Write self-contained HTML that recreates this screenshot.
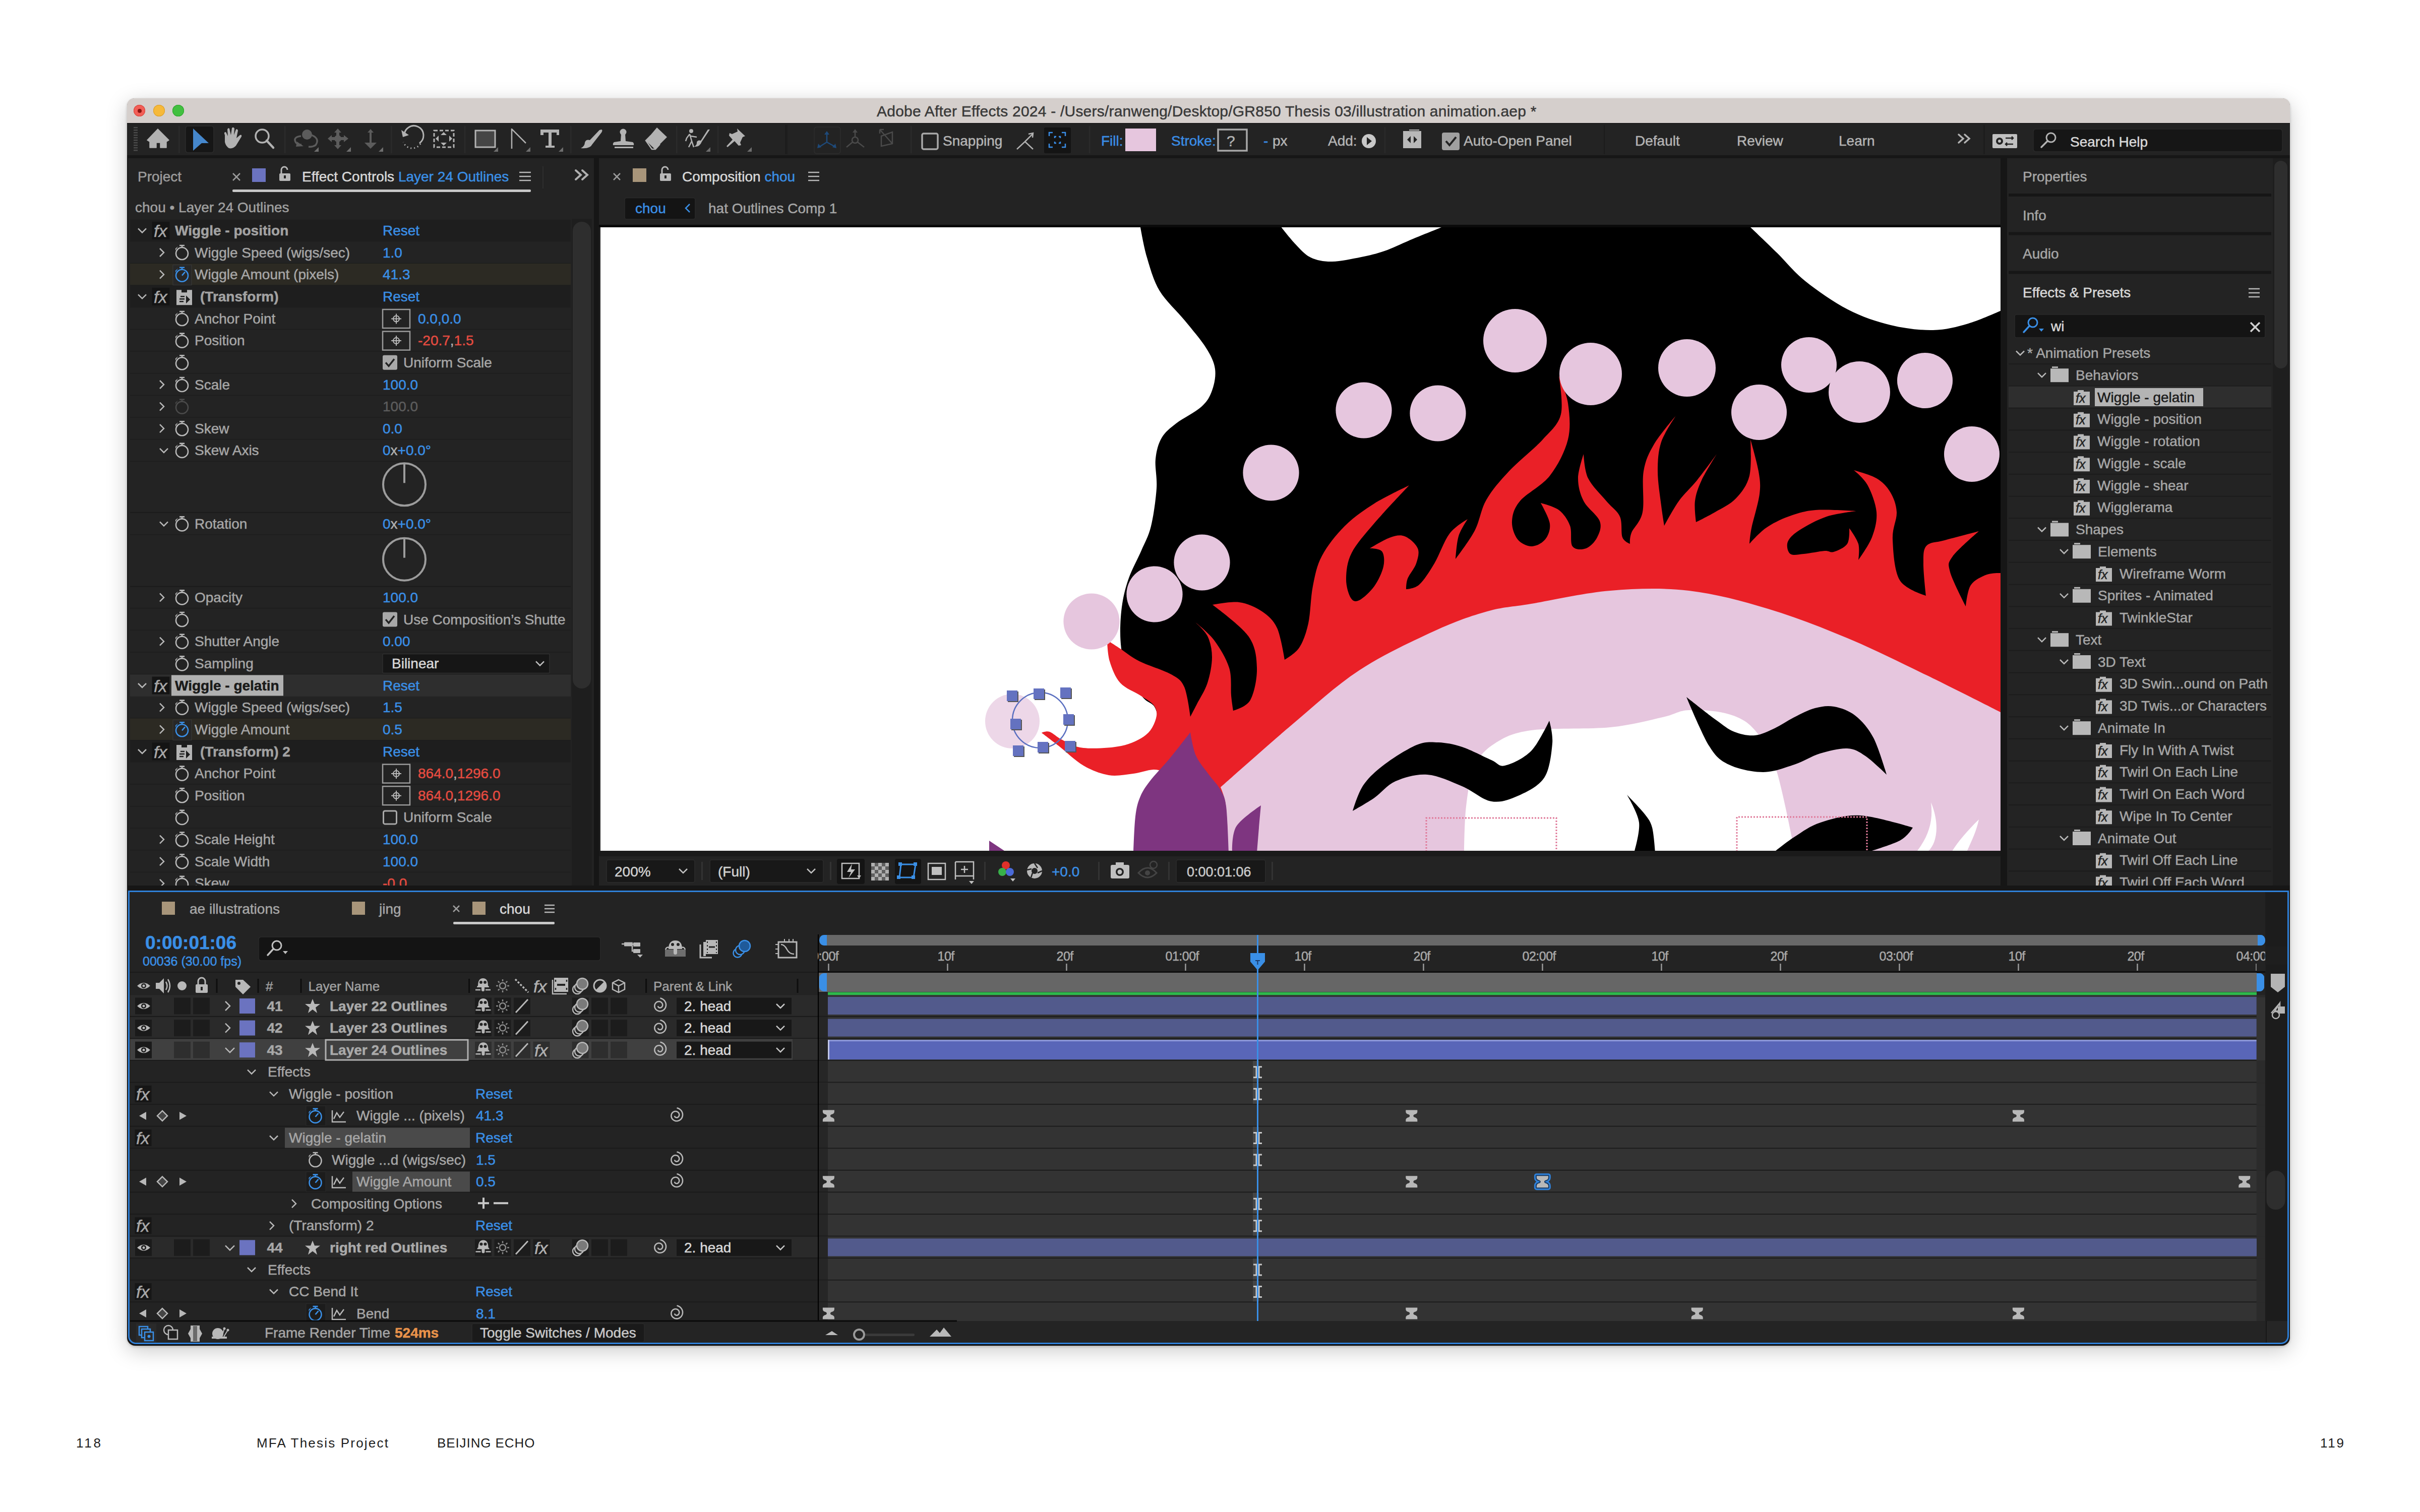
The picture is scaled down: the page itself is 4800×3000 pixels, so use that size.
<!DOCTYPE html><html><head><meta charset="utf-8"><style>
html,body{margin:0;padding:0}
body{width:4800px;height:3000px;background:#fff;position:relative;overflow:hidden;font-family:"Liberation Sans",sans-serif}
.a{position:absolute}
.t{white-space:nowrap;-webkit-text-stroke:0.5px currentColor}
svg.a{overflow:visible}
</style></head><body>
<div class="a t" style="left:151px;top:2842.5px;line-height:40px;font-size:26px;color:#1e1e1e;letter-spacing:3.8px;-webkit-text-stroke:0">118</div>
<div class="a t" style="left:509px;top:2842.5px;line-height:40px;font-size:26px;color:#1e1e1e;letter-spacing:2.2px;-webkit-text-stroke:0">MFA Thesis Project</div>
<div class="a t" style="left:867px;top:2842.5px;line-height:40px;font-size:26px;color:#1e1e1e;letter-spacing:0.9px;-webkit-text-stroke:0">BEIJING ECHO</div>
<div class="a t" style="left:4602px;top:2842.5px;line-height:40px;font-size:26px;color:#1e1e1e;letter-spacing:2.8px;-webkit-text-stroke:0">119</div>
<div class="a" style="left:252px;top:195px;width:4290px;height:2475px;background:#161616;border-radius:16px;box-shadow:0 10px 42px rgba(0,0,0,0.21), 0 2px 5px rgba(0,0,0,0.2);overflow:hidden"></div>
<div class="a" style="left:262px;top:2660px;width:4270px;height:10px;background:#0c0c0c;border-radius:0 0 12px 12px"></div>
<div class="a" style="left:252px;top:195px;width:4290px;height:50px;background:#d5cfcc;border-radius:14px 14px 0 0"></div>
<div class="a" style="left:252px;top:244px;width:4290px;height:2px;background:#1a1a1a"></div>
<div class="a" style="left:265.1px;top:208.2px;width:23px;height:23px;border-radius:50%;background:#f25f57;box-shadow:inset 0 0 0 1px #d9473f"></div>
<div class="a" style="left:303.7px;top:208.2px;width:23px;height:23px;border-radius:50%;background:#f6b93a;box-shadow:inset 0 0 0 1px #dca02b"></div>
<div class="a" style="left:341.8px;top:208.2px;width:23px;height:23px;border-radius:50%;background:#42c040;box-shadow:inset 0 0 0 1px #31a530"></div>
<div class="a" style="left:272.5px;top:215.7px;width:8px;height:8px;border-radius:50%;background:#8a1410"></div>
<div class="a t" style="left:1739px;top:200.5px;line-height:40px;font-size:30px;color:#3a3a3a;letter-spacing:0.22px">Adobe After Effects 2024 - /Users/ranweng/Desktop/GR850 Thesis 03/illustration animation.aep *</div>
<div class="a" style="left:252px;top:246px;width:4290px;height:62px;background:#232323"></div>
<div class="a" style="left:254px;top:314px;width:924px;height:1443px;background:#232323"></div>
<div class="a" style="left:1188px;top:314px;width:2780px;height:1443px;background:#232323"></div>
<div class="a" style="left:3981px;top:314px;width:561px;height:1443px;background:#232323"></div>
<div class="a" style="left:254px;top:1767px;width:4286px;height:898px;background:#232323;border-radius:0 0 16px 16px"></div>
<svg class="a" style="left:252px;top:246px" width="4290" height="62" viewBox="252 246 4290 62"><rect x="265" y="252" width="8" height="2.5" fill="#4a4a4a"/><rect x="265" y="257" width="8" height="2.5" fill="#4a4a4a"/><rect x="265" y="262" width="8" height="2.5" fill="#4a4a4a"/><rect x="265" y="267" width="8" height="2.5" fill="#4a4a4a"/><rect x="265" y="272" width="8" height="2.5" fill="#4a4a4a"/><rect x="265" y="277" width="8" height="2.5" fill="#4a4a4a"/><rect x="265" y="282" width="8" height="2.5" fill="#4a4a4a"/><rect x="265" y="287" width="8" height="2.5" fill="#4a4a4a"/><rect x="265" y="292" width="8" height="2.5" fill="#4a4a4a"/><rect x="265" y="297" width="8" height="2.5" fill="#4a4a4a"/><path d="M313,256 L335,278 L330,281 L330,293 L318,293 L318,283 L310,283 L310,293 L297,293 L297,281 L292,278 Z" fill="#b2b2b2" stroke="#b2b2b2" stroke-width="1.5" stroke-linejoin="round"/><rect x="354" y="250" width="2.5" height="54" fill="#2b2b2b"/><rect x="368" y="250" width="56" height="53" rx="5" fill="#161616" stroke="#2c2c2c" stroke-width="1.5"/><path d="M383,255 L414,284 L400,284 L383,299 Z" fill="#4587cc"/><path d="M446,268 Q443,262 448,262 L452,270 L451,257 Q452,253 455,255 L458,268 L460,254 Q463,251 465,255 L464,268 L468,257 Q471,255 472,259 L469,274 L476,268 Q480,266 479,271 L468,289 Q462,296 454,294 Q448,290 446,282 Z" fill="#b2b2b2"/><circle cx="520" cy="270" r="13" fill="none" stroke="#b2b2b2" stroke-width="3.5"/><path d="M529,279 L542,293" stroke="#b2b2b2" stroke-width="4.5" stroke-linecap="round"/><rect x="564" y="250" width="2.5" height="54" fill="#2b2b2b"/><circle cx="609" cy="267" r="10" fill="#5c5c5c"/><path d="M597,270 Q580,272 587,283 Q592,288 598,287" fill="none" stroke="#5c5c5c" stroke-width="3.5"/><path d="M589,281 L602,290 L587,291Z" fill="#5c5c5c"/><path d="M618,268 Q635,275 626,288 Q620,292 612,291" fill="none" stroke="#5c5c5c" stroke-width="3.5"/><path d="M632,292 L632,301 L623,301Z" fill="#6e6e6e"/><path d="M670,255 L677,263 L673,263 L673,272 L682,272 L682,268 L691,275 L682,282 L682,278 L673,278 L673,288 L677,288 L670,296 L663,288 L667,288 L667,278 L658,278 L658,282 L650,275 L658,268 L658,272 L667,272 L667,263 L663,263Z" fill="#5c5c5c"/><circle cx="670" cy="275" r="7" fill="#5c5c5c"/><path d="M696,292 L696,301 L687,301Z" fill="#6e6e6e"/><path d="M735,256 L741,263 L737,263 L737,283 L747,283 L735,295 L723,283 L733,283 L733,263 L729,263Z" fill="#5c5c5c"/><path d="M760,292 L760,301 L751,301Z" fill="#6e6e6e"/><rect x="775" y="250" width="2.5" height="54" fill="#2b2b2b"/><path d="M802,270 A19,19 0 1 1 832,284" fill="none" stroke="#b2b2b2" stroke-width="3" stroke-dasharray="0"/><path d="M796,258 L799,272 L811,268Z" fill="#b2b2b2"/><path d="M834,285 A19,19 0 0 1 800,282" fill="none" stroke="#b2b2b2" stroke-width="3" stroke-dasharray="2 5"/><rect x="861" y="259" width="39" height="33" fill="none" stroke="#b2b2b2" stroke-width="3" stroke-dasharray="7 4"/><path d="M880,262 L886,268 L874,268Z M880,289 L886,283 L874,283Z M864,275 L870,269 L870,281Z M897,275 L891,269 L891,281Z" fill="#b2b2b2"/><rect x="921" y="250" width="2.5" height="54" fill="#2b2b2b"/><rect x="943" y="259" width="39" height="33" fill="#454545" stroke="#b2b2b2" stroke-width="3"/><path d="M988,292 L988,301 L979,301Z" fill="#6e6e6e"/><path d="M1015,255 L1015,295 M1015,256 L1043,284" stroke="#b2b2b2" stroke-width="2.5" fill="none"/><path d="M1052,292 L1052,301 L1043,301Z" fill="#6e6e6e"/><path d="M1072,257 L1109,257 L1109,268 L1104,268 L1104,263 L1094,263 L1094,289 L1100,289 L1100,293 L1082,293 L1082,289 L1088,289 L1088,263 L1078,263 L1078,268 L1072,268Z" fill="#b2b2b2"/><path d="M1117,292 L1117,301 L1108,301Z" fill="#6e6e6e"/><rect x="1131" y="250" width="2.5" height="54" fill="#2b2b2b"/><path d="M1193,257 Q1196,258 1193,263 L1175,286 Q1170,296 1152,294 Q1160,290 1160,283 Q1162,276 1170,278 L1189,258Z" fill="#b2b2b2"/><circle cx="1236" cy="262" r="6.5" fill="#b2b2b2"/><path d="M1232,266 L1240,266 L1241,280 L1255,282 Q1258,284 1257,288 L1216,288 Q1215,284 1218,282 L1231,280Z" fill="#b2b2b2"/><rect x="1219" y="291" width="37" height="3" fill="#b2b2b2"/><path d="M1303,253 L1323,272 L1299,296 L1281,279Z" fill="#b2b2b2"/><path d="M1291,269 L1281,279 L1293,296 L1300,296 L1309,286" fill="none" stroke="#b2b2b2" stroke-width="2.5"/><rect x="1341" y="250" width="2.5" height="54" fill="#2b2b2b"/><circle cx="1371" cy="260" r="4" fill="#b2b2b2"/><path d="M1368,266 L1362,274 L1360,280 M1368,266 L1372,280 L1366,292 M1372,280 L1376,292 M1370,270 L1382,272" stroke="#b2b2b2" stroke-width="2.5" fill="none"/><path d="M1408,257 L1392,281 Q1388,292 1377,291 Q1383,287 1382,282 Q1384,277 1390,279 L1404,257Z" fill="#b2b2b2"/><path d="M1409,292 L1409,301 L1400,301Z" fill="#6e6e6e"/><rect x="1423" y="250" width="2.5" height="54" fill="#2b2b2b"/><path d="M1462,255 L1478,270 L1473,272 L1468,283 L1470,288 L1465,289 L1457,280 L1443,292 L1441,290 L1453,277 L1446,269 L1447,264 L1452,266 L1463,261Z" fill="#b2b2b2"/><path d="M1491,292 L1491,301 L1482,301Z" fill="#6e6e6e"/><rect x="1557" y="248" width="5" height="58" fill="#1d1d1d"/><rect x="1615" y="252" width="52" height="53" rx="5" fill="none" stroke="#2e2e2e" stroke-width="1.5"/><path d="M1640,263 L1640,282 L1624,292 M1640,282 L1658,292" stroke="#1e4a7a" stroke-width="2.5" fill="none"/><path d="M1640,260 L1645,267 L1635,267Z M1621,294 L1623,285 L1629,292Z M1659,294 L1651,292 L1657,285Z" fill="#1e4a7a"/><circle cx="1696" cy="278" r="6" fill="none" stroke="#4a4a4a" stroke-width="2.5"/><path d="M1696,258 L1696,272 M1691,282 L1679,292 M1701,282 L1714,292" stroke="#4a4a4a" stroke-width="2.5"/><path d="M1696,256 L1701,263 L1691,263Z" fill="#4a4a4a"/><path d="M1745,257 L1770,285 M1745,257 L1745,265 M1745,257 L1753,257 M1748,270 L1770,262 L1770,285 L1748,290Z" stroke="#4a4a4a" stroke-width="2.5" fill="none"/><rect x="1806" y="250" width="2.5" height="54" fill="#2b2b2b"/><rect x="1829" y="265" width="31" height="31" rx="3" fill="none" stroke="#a8a8a8" stroke-width="3.5"/><path d="M2017,296 L2033,281 L2049,296 M2033,281 L2048,266 M2040,266 L2049,264 L2048,273" stroke="#b2b2b2" stroke-width="2.5" fill="none"/><rect x="2070" y="252" width="55" height="53" rx="4" fill="#141414" stroke="#262626" stroke-width="1.5"/><path d="M2081,270 V263 H2088 M2106,263 H2113 V270 M2113,285 V292 H2106 M2088,292 H2081 V285 M2092,274 V271 H2095 M2100,271 H2103 V274 M2103,281 V284 H2100 M2095,284 H2092 V281" stroke="#3a8de6" stroke-width="2.5" fill="none"/><rect x="2160" y="250" width="2.5" height="54" fill="#2b2b2b"/><rect x="2232" y="255" width="61" height="45" fill="#e6c6de"/><rect x="2416" y="257" width="57" height="42" fill="none" stroke="#a8a8a8" stroke-width="3.5"/><circle cx="2715" cy="280" r="14" fill="#c8c8c8"/><path d="M2711,272 L2721,280 L2711,288Z" fill="#232323"/><rect x="2746" y="252" width="2" height="52" fill="#2b2b2b"/><rect x="2783" y="260" width="36" height="34" fill="#b8b8b8"/><rect x="2795" y="257" width="20" height="2" fill="#b8b8b8"/><path d="M2798,270 L2791,277 L2798,284Z M2804,270 L2811,277 L2804,284Z" fill="#232323"/><rect x="2860" y="263" width="35" height="35" rx="4" fill="#a0a0a0"/><path d="M2868,280 L2875,288 L2888,272" stroke="#232323" stroke-width="4" fill="none"/><rect x="3181" y="248" width="2" height="58" fill="#1c1c1c"/><path d="M3885,267 L3894,275 L3885,283 M3897,267 L3906,275 L3897,283" stroke="#b2b2b2" stroke-width="3.5" fill="none" stroke-linecap="round"/><rect x="3934" y="248" width="3" height="58" fill="#1c1c1c"/><rect x="3952" y="266" width="49" height="28" rx="2" fill="#c0c0c0"/><circle cx="3966" cy="280" r="7" fill="#232323"/><circle cx="3966" cy="280" r="3" fill="#c0c0c0"/><path d="M3978,274 H3993 M3990,271 L3993,274 L3990,277 M3993,286 H3978 M3981,283 L3978,286 L3981,289" stroke="#232323" stroke-width="2.5" fill="none"/><rect x="4033" y="256" width="494" height="45" rx="5" fill="#161616" stroke="#2a2a2a" stroke-width="1.5"/><circle cx="4068" cy="273" r="9" fill="none" stroke="#b2b2b2" stroke-width="3"/><path d="M4061,280 L4049,292" stroke="#b2b2b2" stroke-width="3.5" stroke-linecap="round"/></svg>
<div class="a t" style="left:1870px;top:259.5px;line-height:40px;font-size:28px;color:#b4b4b4;">Snapping</div>
<div class="a t" style="left:2184px;top:259.5px;line-height:40px;font-size:28px;color:#3a8de6;">Fill:</div>
<div class="a t" style="left:2323px;top:259.5px;line-height:40px;font-size:28px;color:#3a8de6;">Stroke:</div>
<div class="a t" style="left:2433px;top:259.5px;line-height:40px;font-size:30px;color:#b4b4b4;">?</div>
<div class="a t" style="left:2506px;top:259.5px;line-height:40px;font-size:28px;color:#3a8de6;">-</div>
<div class="a t" style="left:2524px;top:259.5px;line-height:40px;font-size:28px;color:#b4b4b4;">px</div>
<div class="a t" style="left:2634px;top:259.5px;line-height:40px;font-size:28px;color:#b4b4b4;">Add:</div>
<div class="a t" style="left:2903px;top:259.5px;line-height:40px;font-size:28px;color:#b4b4b4;">Auto-Open Panel</div>
<div class="a t" style="left:3243px;top:259.5px;line-height:40px;font-size:28px;color:#b4b4b4;">Default</div>
<div class="a t" style="left:3445px;top:259.5px;line-height:40px;font-size:28px;color:#b4b4b4;">Review</div>
<div class="a t" style="left:3647px;top:259.5px;line-height:40px;font-size:28px;color:#b4b4b4;">Learn</div>
<div class="a t" style="left:4106px;top:261.5px;line-height:40px;font-size:28px;color:#d8d8d8;">Search Help</div>
<div class="a t" style="left:273px;top:330.5px;line-height:40px;font-size:28px;color:#9c9c9c;">Project</div>
<svg class="a" style="left:252px;top:314px" width="930" height="130" viewBox="252 314 930 130"><path d="M462,344 L476,358 M476,344 L462,358" stroke="#9c9c9c" stroke-width="2.5"/><rect x="500" y="334" width="27" height="27" fill="#6b73c0"/><path d="M558,344 V337 A6,6 0 0 1 570,337" fill="none" stroke="#b8b8b8" stroke-width="3"/><rect x="554" y="344" width="22" height="15" rx="2" fill="#b8b8b8"/><rect x="563" y="348" width="4" height="6" fill="#232323"/><path d="M1030,342 H1053 M1030,350 H1053 M1030,358 H1053" stroke="#b8b8b8" stroke-width="2.5"/><rect x="461" y="376" width="592" height="5" rx="2" fill="#c8c8c8"/><rect x="1076" y="330" width="2" height="44" fill="#2e2e2e"/><path d="M1142,338 L1152,347 L1142,356 M1155,338 L1165,347 L1155,356" stroke="#b0b0b0" stroke-width="4" fill="none" stroke-linecap="round"/></svg>
<div class="a t" style="left:599px;top:330.5px;line-height:40px;font-size:28px;color:#d8d8d8;">Effect Controls <span style="color:#3a8fe6">Layer 24 Outlines</span></div>
<div class="a t" style="left:268px;top:391.5px;line-height:40px;font-size:28px;color:#a0a0a0;">chou &#8226; Layer 24 Outlines</div>
<div class="a" style="left:252px;top:434px;width:930px;height:1323px;overflow:hidden"><svg class="a" style="left:0;top:0" width="930" height="1323" viewBox="252 434 930 1323"><rect x="258" y="435.6" width="874" height="44.6" fill="#1e1e1e"/><path d="M274,453.4 L282,461.4 L290,453.4" stroke="#b8b8b8" stroke-width="2.5" fill="none"/><rect x="301.5" y="439.9" width="35" height="35" fill="#141414"/><rect x="258" y="479.2" width="874" height="43.6" fill="#232323"/><rect x="258" y="521.8" width="874" height="2.2" fill="#1c1c1c"/><path d="M317,493.0 L325,501.0 L317,509.0" stroke="#b8b8b8" stroke-width="2.5" fill="none"/><circle cx="361" cy="503.04999999999995" r="12" fill="none" stroke="#b8b8b8" stroke-width="2.6"/><path d="M356,487.04999999999995 H366 M361,487.04999999999995 V491.04999999999995" stroke="#b8b8b8" stroke-width="2.6"/><path d="M348,493.04999999999995 L353,489.04999999999995 L348,497.04999999999995Z" fill="#b8b8b8"/><rect x="258" y="522.9" width="874" height="43.6" fill="#2c2a23"/><rect x="258" y="565.4" width="874" height="2.2" fill="#1c1c1c"/><path d="M317,536.7 L325,544.7 L317,552.7" stroke="#b8b8b8" stroke-width="2.5" fill="none"/><rect x="343" y="525.7" width="37" height="40" fill="#272727" stroke="#3a3a3a" stroke-width="1"/><circle cx="361" cy="546.6999999999999" r="12" fill="none" stroke="#3a8fe6" stroke-width="2.6"/><path d="M356,530.6999999999999 H366 M361,530.6999999999999 V534.6999999999999" stroke="#3a8fe6" stroke-width="2.6"/><path d="M348,536.6999999999999 L353,532.6999999999999 L348,540.6999999999999Z" fill="#3a8fe6"/><path d="M361,546.6999999999999 L367,539.6999999999999" stroke="#3a8fe6" stroke-width="2.6"/><rect x="258" y="566.5" width="874" height="44.6" fill="#1e1e1e"/><path d="M274,584.3 L282,592.3 L290,584.3" stroke="#b8b8b8" stroke-width="2.5" fill="none"/><rect x="301.5" y="570.8" width="35" height="35" fill="#141414"/><path d="M350,575.3 h10 v5 h11 v-5 h10 v30 h-31Z" fill="#b4b4b4"/><path d="M356,593.3 h10 M356,598.3 h8 M358,588.3 h8" stroke="#1e1e1e" stroke-width="2.5"/><path d="M369,586.3 L377,594.3 L369,602.3Z" fill="#1e1e1e"/><rect x="258" y="610.2" width="874" height="43.6" fill="#232323"/><rect x="258" y="652.7" width="874" height="2.2" fill="#1c1c1c"/><circle cx="361" cy="634.0" r="12" fill="none" stroke="#b8b8b8" stroke-width="2.6"/><path d="M356,618.0 H366 M361,618.0 V622.0" stroke="#b8b8b8" stroke-width="2.6"/><path d="M348,624.0 L353,620.0 L348,628.0Z" fill="#b8b8b8"/><rect x="759" y="614.0" width="54" height="37" fill="none" stroke="#9a9a9a" stroke-width="2.5"/><circle cx="786" cy="632.5" r="6" fill="none" stroke="#b8b8b8" stroke-width="2"/><path d="M776,632.5 h20 M786,622.5 v20" stroke="#b8b8b8" stroke-width="2"/><rect x="258" y="653.9" width="874" height="43.6" fill="#232323"/><rect x="258" y="696.4" width="874" height="2.2" fill="#1c1c1c"/><circle cx="361" cy="677.65" r="12" fill="none" stroke="#b8b8b8" stroke-width="2.6"/><path d="M356,661.65 H366 M361,661.65 V665.65" stroke="#b8b8b8" stroke-width="2.6"/><path d="M348,667.65 L353,663.65 L348,671.65Z" fill="#b8b8b8"/><rect x="759" y="657.6" width="54" height="37" fill="none" stroke="#9a9a9a" stroke-width="2.5"/><circle cx="786" cy="676.1" r="6" fill="none" stroke="#b8b8b8" stroke-width="2"/><path d="M776,676.1 h20 M786,666.1 v20" stroke="#b8b8b8" stroke-width="2"/><rect x="258" y="697.5" width="874" height="43.6" fill="#232323"/><rect x="258" y="740.0" width="874" height="2.2" fill="#1c1c1c"/><circle cx="361" cy="721.3" r="12" fill="none" stroke="#b8b8b8" stroke-width="2.6"/><path d="M356,705.3 H366 M361,705.3 V709.3" stroke="#b8b8b8" stroke-width="2.6"/><path d="M348,711.3 L353,707.3 L348,715.3Z" fill="#b8b8b8"/><rect x="759" y="704.8" width="29" height="29" rx="3" fill="#a8a8a8"/><path d="M765,719.3 L771,726.3 L782,712.3" stroke="#232323" stroke-width="3.5" fill="none"/><rect x="258" y="741.2" width="874" height="43.6" fill="#232323"/><rect x="258" y="783.7" width="874" height="2.2" fill="#1c1c1c"/><path d="M317,755.0 L325,763.0 L317,771.0" stroke="#b8b8b8" stroke-width="2.5" fill="none"/><circle cx="361" cy="764.95" r="12" fill="none" stroke="#b8b8b8" stroke-width="2.6"/><path d="M356,748.95 H366 M361,748.95 V752.95" stroke="#b8b8b8" stroke-width="2.6"/><path d="M348,754.95 L353,750.95 L348,758.95Z" fill="#b8b8b8"/><rect x="258" y="784.8" width="874" height="43.6" fill="#232323"/><rect x="258" y="827.3" width="874" height="2.2" fill="#1c1c1c"/><path d="M317,798.6 L325,806.6 L317,814.6" stroke="#b8b8b8" stroke-width="2.5" fill="none"/><circle cx="361" cy="808.5999999999999" r="12" fill="none" stroke="#4a4a4a" stroke-width="2.6"/><path d="M356,792.5999999999999 H366 M361,792.5999999999999 V796.5999999999999" stroke="#4a4a4a" stroke-width="2.6"/><path d="M348,798.5999999999999 L353,794.5999999999999 L348,802.5999999999999Z" fill="#4a4a4a"/><rect x="258" y="828.5" width="874" height="43.6" fill="#232323"/><rect x="258" y="871.0" width="874" height="2.2" fill="#1c1c1c"/><path d="M317,842.2 L325,850.2 L317,858.2" stroke="#b8b8b8" stroke-width="2.5" fill="none"/><circle cx="361" cy="852.25" r="12" fill="none" stroke="#b8b8b8" stroke-width="2.6"/><path d="M356,836.25 H366 M361,836.25 V840.25" stroke="#b8b8b8" stroke-width="2.6"/><path d="M348,842.25 L353,838.25 L348,846.25Z" fill="#b8b8b8"/><rect x="258" y="872.1" width="874" height="43.6" fill="#232323"/><rect x="258" y="914.6" width="874" height="2.2" fill="#1c1c1c"/><path d="M317,889.9 L325,897.9 L333,889.9" stroke="#b8b8b8" stroke-width="2.5" fill="none"/><circle cx="361" cy="895.9" r="12" fill="none" stroke="#b8b8b8" stroke-width="2.6"/><path d="M356,879.9 H366 M361,879.9 V883.9" stroke="#b8b8b8" stroke-width="2.6"/><path d="M348,885.9 L353,881.9 L348,889.9Z" fill="#b8b8b8"/><rect x="258" y="1017.6" width="874" height="43.6" fill="#232323"/><rect x="258" y="1060.1" width="874" height="2.2" fill="#1c1c1c"/><path d="M317,1035.4 L325,1043.4 L333,1035.4" stroke="#b8b8b8" stroke-width="2.5" fill="none"/><circle cx="361" cy="1041.4" r="12" fill="none" stroke="#b8b8b8" stroke-width="2.6"/><path d="M356,1025.4 H366 M361,1025.4 V1029.4" stroke="#b8b8b8" stroke-width="2.6"/><path d="M348,1031.4 L353,1027.4 L348,1035.4Z" fill="#b8b8b8"/><rect x="258" y="1163.6" width="874" height="43.6" fill="#232323"/><rect x="258" y="1206.1" width="874" height="2.2" fill="#1c1c1c"/><path d="M317,1177.4 L325,1185.4 L317,1193.4" stroke="#b8b8b8" stroke-width="2.5" fill="none"/><circle cx="361" cy="1187.4" r="12" fill="none" stroke="#b8b8b8" stroke-width="2.6"/><path d="M356,1171.4 H366 M361,1171.4 V1175.4" stroke="#b8b8b8" stroke-width="2.6"/><path d="M348,1177.4 L353,1173.4 L348,1181.4Z" fill="#b8b8b8"/><rect x="258" y="1207.3" width="874" height="43.6" fill="#232323"/><rect x="258" y="1249.8" width="874" height="2.2" fill="#1c1c1c"/><circle cx="361" cy="1231.0500000000002" r="12" fill="none" stroke="#b8b8b8" stroke-width="2.6"/><path d="M356,1215.0500000000002 H366 M361,1215.0500000000002 V1219.0500000000002" stroke="#b8b8b8" stroke-width="2.6"/><path d="M348,1221.0500000000002 L353,1217.0500000000002 L348,1225.0500000000002Z" fill="#b8b8b8"/><rect x="759" y="1214.6" width="29" height="29" rx="3" fill="#a8a8a8"/><path d="M765,1229.1 L771,1236.1 L782,1222.1" stroke="#232323" stroke-width="3.5" fill="none"/><rect x="258" y="1250.9" width="874" height="43.6" fill="#232323"/><rect x="258" y="1293.4" width="874" height="2.2" fill="#1c1c1c"/><path d="M317,1264.7 L325,1272.7 L317,1280.7" stroke="#b8b8b8" stroke-width="2.5" fill="none"/><circle cx="361" cy="1274.7" r="12" fill="none" stroke="#b8b8b8" stroke-width="2.6"/><path d="M356,1258.7 H366 M361,1258.7 V1262.7" stroke="#b8b8b8" stroke-width="2.6"/><path d="M348,1264.7 L353,1260.7 L348,1268.7Z" fill="#b8b8b8"/><rect x="258" y="1294.6" width="874" height="43.6" fill="#232323"/><rect x="258" y="1337.1" width="874" height="2.2" fill="#1c1c1c"/><circle cx="361" cy="1318.3500000000001" r="12" fill="none" stroke="#b8b8b8" stroke-width="2.6"/><path d="M356,1302.3500000000001 H366 M361,1302.3500000000001 V1306.3500000000001" stroke="#b8b8b8" stroke-width="2.6"/><path d="M348,1308.3500000000001 L353,1304.3500000000001 L348,1312.3500000000001Z" fill="#b8b8b8"/><rect x="759" y="1297.4" width="331" height="38" rx="2" fill="#161616" stroke="#2e2e2e" stroke-width="1.5"/><path d="M1063,1312.4 L1071,1320.4 L1079,1312.4" stroke="#c0c0c0" stroke-width="2.5" fill="none"/><rect x="258" y="1338.2" width="874" height="44.6" fill="#2e2e2e"/><path d="M274,1356.0 L282,1364.0 L290,1356.0" stroke="#b8b8b8" stroke-width="2.5" fill="none"/><rect x="301.5" y="1342.5" width="35" height="35" fill="#141414"/><rect x="340" y="1339.5" width="222" height="41" fill="#b0b0b0"/><rect x="258" y="1381.9" width="874" height="43.6" fill="#232323"/><rect x="258" y="1424.4" width="874" height="2.2" fill="#1c1c1c"/><path d="M317,1395.7 L325,1403.7 L317,1411.7" stroke="#b8b8b8" stroke-width="2.5" fill="none"/><circle cx="361" cy="1405.65" r="12" fill="none" stroke="#b8b8b8" stroke-width="2.6"/><path d="M356,1389.65 H366 M361,1389.65 V1393.65" stroke="#b8b8b8" stroke-width="2.6"/><path d="M348,1395.65 L353,1391.65 L348,1399.65Z" fill="#b8b8b8"/><rect x="258" y="1425.5" width="874" height="43.6" fill="#2c2a23"/><rect x="258" y="1468.0" width="874" height="2.2" fill="#1c1c1c"/><path d="M317,1439.3 L325,1447.3 L317,1455.3" stroke="#b8b8b8" stroke-width="2.5" fill="none"/><rect x="343" y="1428.3" width="37" height="40" fill="#272727" stroke="#3a3a3a" stroke-width="1"/><circle cx="361" cy="1449.3000000000002" r="12" fill="none" stroke="#3a8fe6" stroke-width="2.6"/><path d="M356,1433.3000000000002 H366 M361,1433.3000000000002 V1437.3000000000002" stroke="#3a8fe6" stroke-width="2.6"/><path d="M348,1439.3000000000002 L353,1435.3000000000002 L348,1443.3000000000002Z" fill="#3a8fe6"/><path d="M361,1449.3000000000002 L367,1442.3000000000002" stroke="#3a8fe6" stroke-width="2.6"/><rect x="258" y="1469.2" width="874" height="44.6" fill="#1e1e1e"/><path d="M274,1487.0 L282,1495.0 L290,1487.0" stroke="#b8b8b8" stroke-width="2.5" fill="none"/><rect x="301.5" y="1473.5" width="35" height="35" fill="#141414"/><path d="M350,1478.0 h10 v5 h11 v-5 h10 v30 h-31Z" fill="#b4b4b4"/><path d="M356,1496.0 h10 M356,1501.0 h8 M358,1491.0 h8" stroke="#1e1e1e" stroke-width="2.5"/><path d="M369,1489.0 L377,1497.0 L369,1505.0Z" fill="#1e1e1e"/><rect x="258" y="1512.8" width="874" height="43.6" fill="#232323"/><rect x="258" y="1555.3" width="874" height="2.2" fill="#1c1c1c"/><circle cx="361" cy="1536.6000000000001" r="12" fill="none" stroke="#b8b8b8" stroke-width="2.6"/><path d="M356,1520.6000000000001 H366 M361,1520.6000000000001 V1524.6000000000001" stroke="#b8b8b8" stroke-width="2.6"/><path d="M348,1526.6000000000001 L353,1522.6000000000001 L348,1530.6000000000001Z" fill="#b8b8b8"/><rect x="759" y="1516.6" width="54" height="37" fill="none" stroke="#9a9a9a" stroke-width="2.5"/><circle cx="786" cy="1535.1" r="6" fill="none" stroke="#b8b8b8" stroke-width="2"/><path d="M776,1535.1 h20 M786,1525.1 v20" stroke="#b8b8b8" stroke-width="2"/><rect x="258" y="1556.5" width="874" height="43.6" fill="#232323"/><rect x="258" y="1599.0" width="874" height="2.2" fill="#1c1c1c"/><circle cx="361" cy="1580.25" r="12" fill="none" stroke="#b8b8b8" stroke-width="2.6"/><path d="M356,1564.25 H366 M361,1564.25 V1568.25" stroke="#b8b8b8" stroke-width="2.6"/><path d="M348,1570.25 L353,1566.25 L348,1574.25Z" fill="#b8b8b8"/><rect x="759" y="1560.2" width="54" height="37" fill="none" stroke="#9a9a9a" stroke-width="2.5"/><circle cx="786" cy="1578.8" r="6" fill="none" stroke="#b8b8b8" stroke-width="2"/><path d="M776,1578.8 h20 M786,1568.8 v20" stroke="#b8b8b8" stroke-width="2"/><rect x="258" y="1600.1" width="874" height="43.6" fill="#232323"/><rect x="258" y="1642.6" width="874" height="2.2" fill="#1c1c1c"/><circle cx="361" cy="1623.9" r="12" fill="none" stroke="#b8b8b8" stroke-width="2.6"/><path d="M356,1607.9 H366 M361,1607.9 V1611.9" stroke="#b8b8b8" stroke-width="2.6"/><path d="M348,1613.9 L353,1609.9 L348,1617.9Z" fill="#b8b8b8"/><rect x="760.5" y="1608.9" width="26" height="26" rx="3" fill="none" stroke="#a8a8a8" stroke-width="3"/><rect x="258" y="1643.8" width="874" height="43.6" fill="#232323"/><rect x="258" y="1686.3" width="874" height="2.2" fill="#1c1c1c"/><path d="M317,1657.6 L325,1665.6 L317,1673.6" stroke="#b8b8b8" stroke-width="2.5" fill="none"/><circle cx="361" cy="1667.5500000000002" r="12" fill="none" stroke="#b8b8b8" stroke-width="2.6"/><path d="M356,1651.5500000000002 H366 M361,1651.5500000000002 V1655.5500000000002" stroke="#b8b8b8" stroke-width="2.6"/><path d="M348,1657.5500000000002 L353,1653.5500000000002 L348,1661.5500000000002Z" fill="#b8b8b8"/><rect x="258" y="1687.4" width="874" height="43.6" fill="#232323"/><rect x="258" y="1729.9" width="874" height="2.2" fill="#1c1c1c"/><path d="M317,1701.2 L325,1709.2 L317,1717.2" stroke="#b8b8b8" stroke-width="2.5" fill="none"/><circle cx="361" cy="1711.2" r="12" fill="none" stroke="#b8b8b8" stroke-width="2.6"/><path d="M356,1695.2 H366 M361,1695.2 V1699.2" stroke="#b8b8b8" stroke-width="2.6"/><path d="M348,1701.2 L353,1697.2 L348,1705.2Z" fill="#b8b8b8"/><rect x="258" y="1731.0" width="874" height="43.6" fill="#232323"/><rect x="258" y="1773.5" width="874" height="2.2" fill="#1c1c1c"/><path d="M317,1744.8 L325,1752.8 L317,1760.8" stroke="#b8b8b8" stroke-width="2.5" fill="none"/><circle cx="361" cy="1754.85" r="12" fill="none" stroke="#b8b8b8" stroke-width="2.6"/><path d="M356,1738.85 H366 M361,1738.85 V1742.85" stroke="#b8b8b8" stroke-width="2.6"/><path d="M348,1744.85 L353,1740.85 L348,1748.85Z" fill="#b8b8b8"/><rect x="258" y="915.7" width="874" height="101" fill="#232323"/><rect x="258" y="1015.7" width="874" height="2.2" fill="#1c1c1c"/><circle cx="802" cy="961.3" r="42" fill="none" stroke="#9c9c9c" stroke-width="4"/><path d="M802,919.3 V958.3" stroke="#9c9c9c" stroke-width="4"/><rect x="258" y="1061.2" width="874" height="102.5" fill="#232323"/><rect x="258" y="1162.7" width="874" height="2.2" fill="#1c1c1c"/><circle cx="802" cy="1109.7" r="42" fill="none" stroke="#9c9c9c" stroke-width="4"/><path d="M802,1067.7 V1106.7" stroke="#9c9c9c" stroke-width="4"/><rect x="1134" y="434" width="40" height="1323" fill="#1e1e1e"/><rect x="1136" y="440" width="36" height="926" rx="18" fill="#2e2e2e"/></svg>
<div class="a t" style="left:53px;top:3.9px;line-height:40px;font-size:34px;color:#a8a8a8;"><i style="font-family:Liberation Sans;font-size:34px;font-weight:normal">fx</i></div>
<div class="a t" style="left:95px;top:3.9px;line-height:40px;font-size:28px;color:#a2a2a2;font-weight:bold">Wiggle - position</div>
<div class="a t" style="left:507px;top:3.9px;line-height:40px;font-size:28px;color:#3a8fe6;">Reset</div>
<div class="a t" style="left:134px;top:47.5px;line-height:40px;font-size:28px;color:#a6a6a6;">Wiggle Speed (wigs/sec)</div>
<div class="a t" style="left:507px;top:47.5px;line-height:40px;font-size:28px;color:#3a8fe6;">1.0</div>
<div class="a t" style="left:134px;top:91.2px;line-height:40px;font-size:28px;color:#a6a6a6;">Wiggle Amount (pixels)</div>
<div class="a t" style="left:507px;top:91.2px;line-height:40px;font-size:28px;color:#3a8fe6;">41.3</div>
<div class="a t" style="left:53px;top:134.8px;line-height:40px;font-size:34px;color:#a8a8a8;"><i style="font-family:Liberation Sans;font-size:34px;font-weight:normal">fx</i></div>
<div class="a t" style="left:145px;top:134.8px;line-height:40px;font-size:28px;color:#a2a2a2;font-weight:bold">(Transform)</div>
<div class="a t" style="left:507px;top:134.8px;line-height:40px;font-size:28px;color:#3a8fe6;">Reset</div>
<div class="a t" style="left:134px;top:178.5px;line-height:40px;font-size:28px;color:#a6a6a6;">Anchor Point</div>
<div class="a t" style="left:577px;top:178.5px;line-height:40px;font-size:28px;color:#3a8fe6;">0.0,0.0</div>
<div class="a t" style="left:134px;top:222.1px;line-height:40px;font-size:28px;color:#a6a6a6;">Position</div>
<div class="a t" style="left:577px;top:222.1px;line-height:40px;font-size:28px;color:#e34b40;">-20.7<span style="color:#b0b0b0">,</span>1.5</div>
<div class="a t" style="left:548px;top:265.8px;line-height:40px;font-size:28px;color:#a6a6a6;">Uniform Scale</div>
<div class="a t" style="left:134px;top:309.5px;line-height:40px;font-size:28px;color:#a6a6a6;">Scale</div>
<div class="a t" style="left:507px;top:309.5px;line-height:40px;font-size:28px;color:#3a8fe6;">100.0</div>
<div class="a t" style="left:507px;top:353.1px;line-height:40px;font-size:28px;color:#5c5c5c;">100.0</div>
<div class="a t" style="left:134px;top:396.8px;line-height:40px;font-size:28px;color:#a6a6a6;">Skew</div>
<div class="a t" style="left:507px;top:396.8px;line-height:40px;font-size:28px;color:#3a8fe6;">0.0</div>
<div class="a t" style="left:134px;top:440.4px;line-height:40px;font-size:28px;color:#a6a6a6;">Skew Axis</div>
<div class="a t" style="left:507px;top:440.4px;line-height:40px;font-size:28px;color:#3a8fe6;">0<span style="color:#b0b0b0">x</span>+0.0&#176;</div>
<div class="a t" style="left:134px;top:585.9px;line-height:40px;font-size:28px;color:#a6a6a6;">Rotation</div>
<div class="a t" style="left:507px;top:585.9px;line-height:40px;font-size:28px;color:#3a8fe6;">0<span style="color:#b0b0b0">x</span>+0.0&#176;</div>
<div class="a t" style="left:134px;top:731.9px;line-height:40px;font-size:28px;color:#a6a6a6;">Opacity</div>
<div class="a t" style="left:507px;top:731.9px;line-height:40px;font-size:28px;color:#3a8fe6;">100.0</div>
<div class="a t" style="left:548px;top:775.6px;line-height:40px;font-size:28px;color:#a6a6a6;">Use Composition&#8217;s Shutte</div>
<div class="a t" style="left:134px;top:819.2px;line-height:40px;font-size:28px;color:#a6a6a6;">Shutter Angle</div>
<div class="a t" style="left:507px;top:819.2px;line-height:40px;font-size:28px;color:#3a8fe6;">0.00</div>
<div class="a t" style="left:134px;top:862.9px;line-height:40px;font-size:28px;color:#a6a6a6;">Sampling</div>
<div class="a t" style="left:525px;top:862.9px;line-height:40px;font-size:28px;color:#d8d8d8;">Bilinear</div>
<div class="a t" style="left:53px;top:906.5px;line-height:40px;font-size:34px;color:#a8a8a8;"><i style="font-family:Liberation Sans;font-size:34px;font-weight:normal">fx</i></div>
<div class="a t" style="left:95px;top:906.5px;line-height:40px;font-size:28px;color:#1a1a1a;font-weight:bold">Wiggle - gelatin</div>
<div class="a t" style="left:507px;top:906.5px;line-height:40px;font-size:28px;color:#3a8fe6;">Reset</div>
<div class="a t" style="left:134px;top:950.2px;line-height:40px;font-size:28px;color:#a6a6a6;">Wiggle Speed (wigs/sec)</div>
<div class="a t" style="left:507px;top:950.2px;line-height:40px;font-size:28px;color:#3a8fe6;">1.5</div>
<div class="a t" style="left:134px;top:993.8px;line-height:40px;font-size:28px;color:#a6a6a6;">Wiggle Amount</div>
<div class="a t" style="left:507px;top:993.8px;line-height:40px;font-size:28px;color:#3a8fe6;">0.5</div>
<div class="a t" style="left:53px;top:1037.5px;line-height:40px;font-size:34px;color:#a8a8a8;"><i style="font-family:Liberation Sans;font-size:34px;font-weight:normal">fx</i></div>
<div class="a t" style="left:145px;top:1037.5px;line-height:40px;font-size:28px;color:#a2a2a2;font-weight:bold">(Transform) 2</div>
<div class="a t" style="left:507px;top:1037.5px;line-height:40px;font-size:28px;color:#3a8fe6;">Reset</div>
<div class="a t" style="left:134px;top:1081.1px;line-height:40px;font-size:28px;color:#a6a6a6;">Anchor Point</div>
<div class="a t" style="left:577px;top:1081.1px;line-height:40px;font-size:28px;color:#e34b40;">864.0<span style="color:#b0b0b0">,</span>1296.0</div>
<div class="a t" style="left:134px;top:1124.8px;line-height:40px;font-size:28px;color:#a6a6a6;">Position</div>
<div class="a t" style="left:577px;top:1124.8px;line-height:40px;font-size:28px;color:#e34b40;">864.0<span style="color:#b0b0b0">,</span>1296.0</div>
<div class="a t" style="left:548px;top:1168.4px;line-height:40px;font-size:28px;color:#a6a6a6;">Uniform Scale</div>
<div class="a t" style="left:134px;top:1212.1px;line-height:40px;font-size:28px;color:#a6a6a6;">Scale Height</div>
<div class="a t" style="left:507px;top:1212.1px;line-height:40px;font-size:28px;color:#3a8fe6;">100.0</div>
<div class="a t" style="left:134px;top:1255.7px;line-height:40px;font-size:28px;color:#a6a6a6;">Scale Width</div>
<div class="a t" style="left:507px;top:1255.7px;line-height:40px;font-size:28px;color:#3a8fe6;">100.0</div>
<div class="a t" style="left:134px;top:1299.3px;line-height:40px;font-size:28px;color:#a6a6a6;">Skew</div>
<div class="a t" style="left:507px;top:1299.3px;line-height:40px;font-size:28px;color:#e34b40;">-0.0</div>
</div>
<svg class="a" style="left:1188px;top:314px" width="2780" height="1450" viewBox="1188 314 2780 1450"><path d="M1217,344 L1230,357 M1230,344 L1217,357" stroke="#9c9c9c" stroke-width="2.5"/><rect x="1255" y="334" width="27" height="27" fill="#a8957a"/><path d="M1313,344 V337 A6,6 0 0 1 1325,337" fill="none" stroke="#b8b8b8" stroke-width="3"/><rect x="1309" y="344" width="22" height="15" rx="2" fill="#b8b8b8"/><rect x="1318" y="348" width="4" height="6" fill="#232323"/><path d="M1603,342 H1625 M1603,350 H1625 M1603,358 H1625" stroke="#b8b8b8" stroke-width="2.5"/><rect x="1239" y="392.5" width="140" height="42.5" rx="4" fill="#141414" stroke="#2a2a2a" stroke-width="1.5"/><path d="M1368,405 L1360,413 L1368,421" stroke="#3a8fe6" stroke-width="2.5" fill="none"/><rect x="1188" y="446" width="2780" height="5" fill="#0a0a0a"/><rect x="1188" y="1688" width="2780" height="11" fill="#1a1a1a"/><rect x="1203" y="1706" width="175" height="45" rx="4" fill="#181818" stroke="#2c2c2c" stroke-width="1.5"/><path d="M1347,1724 L1355,1732 L1363,1724" stroke="#c0c0c0" stroke-width="2.5" fill="none"/><rect x="1391" y="1710" width="3" height="36" fill="#333"/><rect x="1408" y="1706" width="225" height="45" rx="4" fill="#181818" stroke="#2c2c2c" stroke-width="1.5"/><path d="M1601,1724 L1609,1732 L1617,1724" stroke="#c0c0c0" stroke-width="2.5" fill="none"/><rect x="1646" y="1710" width="3" height="36" fill="#333"/><rect x="1660" y="1704" width="55" height="50" rx="4" fill="#141414"/><rect x="1670" y="1713" width="34" height="30" fill="none" stroke="#c0c0c0" stroke-width="2.5"/><path d="M1690,1714 L1680,1730 L1688,1730 L1683,1742 L1696,1725 L1688,1725Z" fill="#c0c0c0"/><path d="M1700,1737 L1708,1737 L1704,1743Z" fill="#c0c0c0"/><rect x="1728" y="1712" width="7" height="7" fill="#b0b0b0"/><rect x="1728" y="1719" width="7" height="7" fill="#606060"/><rect x="1728" y="1726" width="7" height="7" fill="#b0b0b0"/><rect x="1728" y="1733" width="7" height="7" fill="#606060"/><rect x="1728" y="1740" width="7" height="7" fill="#b0b0b0"/><rect x="1735" y="1712" width="7" height="7" fill="#606060"/><rect x="1735" y="1719" width="7" height="7" fill="#b0b0b0"/><rect x="1735" y="1726" width="7" height="7" fill="#606060"/><rect x="1735" y="1733" width="7" height="7" fill="#b0b0b0"/><rect x="1735" y="1740" width="7" height="7" fill="#606060"/><rect x="1742" y="1712" width="7" height="7" fill="#b0b0b0"/><rect x="1742" y="1719" width="7" height="7" fill="#606060"/><rect x="1742" y="1726" width="7" height="7" fill="#b0b0b0"/><rect x="1742" y="1733" width="7" height="7" fill="#606060"/><rect x="1742" y="1740" width="7" height="7" fill="#b0b0b0"/><rect x="1749" y="1712" width="7" height="7" fill="#606060"/><rect x="1749" y="1719" width="7" height="7" fill="#b0b0b0"/><rect x="1749" y="1726" width="7" height="7" fill="#606060"/><rect x="1749" y="1733" width="7" height="7" fill="#b0b0b0"/><rect x="1749" y="1740" width="7" height="7" fill="#606060"/><rect x="1756" y="1712" width="7" height="7" fill="#b0b0b0"/><rect x="1756" y="1719" width="7" height="7" fill="#606060"/><rect x="1756" y="1726" width="7" height="7" fill="#b0b0b0"/><rect x="1756" y="1733" width="7" height="7" fill="#606060"/><rect x="1756" y="1740" width="7" height="7" fill="#b0b0b0"/><rect x="1775" y="1704" width="52" height="50" rx="4" fill="#141414"/><path d="M1787,1715 L1816,1715 L1812,1741 L1784,1741Z" fill="none" stroke="#3a8fe6" stroke-width="3"/><rect x="1782" y="1711" width="7" height="7" fill="#3a8fe6"/><rect x="1812" y="1711" width="7" height="7" fill="#3a8fe6"/><rect x="1779" y="1737" width="7" height="7" fill="#3a8fe6"/><rect x="1808" y="1737" width="7" height="7" fill="#3a8fe6"/><rect x="1841" y="1713" width="34" height="32" fill="none" stroke="#c0c0c0" stroke-width="2.5"/><rect x="1848" y="1720" width="20" height="16" fill="#c0c0c0"/><path d="M1895,1710 V1745 M1895,1710 H1931 V1745 M1895,1738 H1931 M1913,1718 V1732 M1906,1725 H1920" stroke="#c0c0c0" stroke-width="2.5" fill="none"/><path d="M1922,1748 L1932,1748 L1927,1754Z" fill="#c0c0c0"/><rect x="1952" y="1710" width="3" height="36" fill="#333"/><circle cx="1995" cy="1717" r="8" fill="#e0302a"/><circle cx="1988" cy="1730" r="8" fill="#38b04a"/><circle cx="2003" cy="1730" r="8" fill="#4a6ad8"/><path d="M2004,1743 L2014,1743 L2009,1749Z" fill="#c0c0c0"/><circle cx="2052" cy="1728" r="15" fill="#b8b8b8"/><circle cx="2052" cy="1728" r="6" fill="#232323"/><path d="M2052,1713 L2058,1722 M2067,1728 L2058,1732 M2045,1741 L2048,1732 M2037,1726 L2046,1724" stroke="#232323" stroke-width="2.5"/><rect x="2178" y="1710" width="3" height="36" fill="#333"/><rect x="2203" y="1716" width="37" height="27" rx="3" fill="#c0c0c0"/><rect x="2213" y="1711" width="16" height="7" fill="#c0c0c0"/><circle cx="2221" cy="1730" r="8" fill="#232323"/><circle cx="2221" cy="1730" r="4.5" fill="#c0c0c0"/><path d="M2258,1732 Q2276,1712 2294,1732 Q2276,1750 2258,1732Z" fill="none" stroke="#444" stroke-width="3"/><circle cx="2276" cy="1732" r="5" fill="#444"/><circle cx="2288" cy="1716" r="7" fill="none" stroke="#444" stroke-width="2.5"/><rect x="2317" y="1710" width="3" height="36" fill="#333"/><rect x="2333" y="1706" width="177" height="45" rx="4" fill="#181818" stroke="#2c2c2c" stroke-width="1.5"/><rect x="2522" y="1710" width="3" height="36" fill="#333"/></svg>
<div class="a t" style="left:1353px;top:330.5px;line-height:40px;font-size:28px;color:#d8d8d8;">Composition <span style="color:#3a8fe6">chou</span></div>
<div class="a t" style="left:1260px;top:393.5px;line-height:40px;font-size:28px;color:#3a8fe6;">chou</div>
<div class="a t" style="left:1405px;top:393.5px;line-height:40px;font-size:28px;color:#a6a6a6;">hat Outlines Comp 1</div>
<div class="a t" style="left:1219px;top:1709.5px;line-height:40px;font-size:28px;color:#d0d0d0;">200%</div>
<div class="a t" style="left:1424px;top:1709.5px;line-height:40px;font-size:28px;color:#d0d0d0;">(Full)</div>
<div class="a t" style="left:2086px;top:1709.5px;line-height:40px;font-size:28px;color:#3a8fe6;">+0.0</div>
<div class="a t" style="left:2354px;top:1709.5px;line-height:40px;font-size:27px;color:#c8c8c8;">0:00:01:06</div>
<div class="a" style="left:3981px;top:314px;width:561px;height:1443px;overflow:hidden"><svg class="a" style="left:0;top:0" width="561" height="1443" viewBox="3981 314 561 1443"><rect x="3984" y="384" width="521" height="6" fill="#161616"/><rect x="3984" y="460.5" width="521" height="6" fill="#161616"/><rect x="3984" y="537.5" width="521" height="6" fill="#161616"/><path d="M4460,573 H4482 M4460,581 H4482 M4460,589 H4482" stroke="#b8b8b8" stroke-width="2.5"/><rect x="3996" y="624" width="497" height="46" rx="4" fill="#141414" stroke="#2a2a2a" stroke-width="1.5"/><circle cx="4032" cy="640" r="9" fill="none" stroke="#3a8fe6" stroke-width="3"/><path d="M4025,647 L4014,659" stroke="#3a8fe6" stroke-width="3.5" stroke-linecap="round"/><path d="M4044,652 L4054,652 L4049,658Z" fill="#3a8fe6"/><path d="M4464,640 L4482,658 M4482,640 L4464,658" stroke="#d0d0d0" stroke-width="3.5"/><rect x="4508" y="314" width="34" height="1443" fill="#1e1e1e"/><rect x="4511" y="319" width="26" height="412" rx="13" fill="#2e2e2e"/><rect x="3984" y="721.1" width="521" height="2" fill="#1c1c1c"/><path d="M3999,696.5 L4007,704.5 L4015,696.5" stroke="#b8b8b8" stroke-width="2.5" fill="none"/><rect x="3984" y="764.9" width="521" height="2" fill="#1c1c1c"/><path d="M4070,740.2 L4061,748.2" stroke="none"/><path d="M4042,740.2 L4050,748.2 L4058,740.2" stroke="#b8b8b8" stroke-width="2.5" fill="none"/><rect x="4067" y="731.2" width="36" height="27" fill="#b8b8b8"/><rect x="4070" y="727.2" width="12" height="3" fill="#b8b8b8"/><rect x="3984" y="766.6" width="521" height="43" fill="#2e2e2e"/><rect x="3984" y="808.6" width="521" height="2" fill="#1c1c1c"/><path d="M4113,777.0 h8 v-3 h12 v3 h12 v27 h-32Z" fill="#b8b8b8"/><rect x="4155" y="770.0" width="215" height="36" fill="#b4b4b4"/><rect x="3984" y="852.4" width="521" height="2" fill="#1c1c1c"/><path d="M4113,820.8 h8 v-3 h12 v3 h12 v27 h-32Z" fill="#b8b8b8"/><rect x="3984" y="896.1" width="521" height="2" fill="#1c1c1c"/><path d="M4113,864.5 h8 v-3 h12 v3 h12 v27 h-32Z" fill="#b8b8b8"/><rect x="3984" y="939.9" width="521" height="2" fill="#1c1c1c"/><path d="M4113,908.2 h8 v-3 h12 v3 h12 v27 h-32Z" fill="#b8b8b8"/><rect x="3984" y="983.6" width="521" height="2" fill="#1c1c1c"/><path d="M4113,952.0 h8 v-3 h12 v3 h12 v27 h-32Z" fill="#b8b8b8"/><rect x="3984" y="1027.3" width="521" height="2" fill="#1c1c1c"/><path d="M4113,995.8 h8 v-3 h12 v3 h12 v27 h-32Z" fill="#b8b8b8"/><rect x="3984" y="1071.1" width="521" height="2" fill="#1c1c1c"/><path d="M4070,1046.5 L4061,1054.5" stroke="none"/><path d="M4042,1046.5 L4050,1054.5 L4058,1046.5" stroke="#b8b8b8" stroke-width="2.5" fill="none"/><rect x="4067" y="1037.5" width="36" height="27" fill="#b8b8b8"/><rect x="4070" y="1033.5" width="12" height="3" fill="#b8b8b8"/><rect x="3984" y="1114.8" width="521" height="2" fill="#1c1c1c"/><path d="M4114,1090.2 L4105,1098.2" stroke="none"/><path d="M4086,1090.2 L4094,1098.2 L4102,1090.2" stroke="#b8b8b8" stroke-width="2.5" fill="none"/><rect x="4111" y="1081.2" width="36" height="27" fill="#b8b8b8"/><rect x="4114" y="1077.2" width="12" height="3" fill="#b8b8b8"/><rect x="3984" y="1158.6" width="521" height="2" fill="#1c1c1c"/><path d="M4157,1127.0 h8 v-3 h12 v3 h12 v27 h-32Z" fill="#b8b8b8"/><rect x="3984" y="1202.3" width="521" height="2" fill="#1c1c1c"/><path d="M4114,1177.8 L4105,1185.8" stroke="none"/><path d="M4086,1177.8 L4094,1185.8 L4102,1177.8" stroke="#b8b8b8" stroke-width="2.5" fill="none"/><rect x="4111" y="1168.8" width="36" height="27" fill="#b8b8b8"/><rect x="4114" y="1164.8" width="12" height="3" fill="#b8b8b8"/><rect x="3984" y="1246.1" width="521" height="2" fill="#1c1c1c"/><path d="M4157,1214.5 h8 v-3 h12 v3 h12 v27 h-32Z" fill="#b8b8b8"/><rect x="3984" y="1289.8" width="521" height="2" fill="#1c1c1c"/><path d="M4070,1265.2 L4061,1273.2" stroke="none"/><path d="M4042,1265.2 L4050,1273.2 L4058,1265.2" stroke="#b8b8b8" stroke-width="2.5" fill="none"/><rect x="4067" y="1256.2" width="36" height="27" fill="#b8b8b8"/><rect x="4070" y="1252.2" width="12" height="3" fill="#b8b8b8"/><rect x="3984" y="1333.6" width="521" height="2" fill="#1c1c1c"/><path d="M4114,1309.0 L4105,1317.0" stroke="none"/><path d="M4086,1309.0 L4094,1317.0 L4102,1309.0" stroke="#b8b8b8" stroke-width="2.5" fill="none"/><rect x="4111" y="1300.0" width="36" height="27" fill="#b8b8b8"/><rect x="4114" y="1296.0" width="12" height="3" fill="#b8b8b8"/><rect x="3984" y="1377.3" width="521" height="2" fill="#1c1c1c"/><path d="M4157,1345.8 h8 v-3 h12 v3 h12 v27 h-32Z" fill="#b8b8b8"/><rect x="3984" y="1421.1" width="521" height="2" fill="#1c1c1c"/><path d="M4157,1389.5 h8 v-3 h12 v3 h12 v27 h-32Z" fill="#b8b8b8"/><rect x="3984" y="1464.8" width="521" height="2" fill="#1c1c1c"/><path d="M4114,1440.2 L4105,1448.2" stroke="none"/><path d="M4086,1440.2 L4094,1448.2 L4102,1440.2" stroke="#b8b8b8" stroke-width="2.5" fill="none"/><rect x="4111" y="1431.2" width="36" height="27" fill="#b8b8b8"/><rect x="4114" y="1427.2" width="12" height="3" fill="#b8b8b8"/><rect x="3984" y="1508.6" width="521" height="2" fill="#1c1c1c"/><path d="M4157,1477.0 h8 v-3 h12 v3 h12 v27 h-32Z" fill="#b8b8b8"/><rect x="3984" y="1552.3" width="521" height="2" fill="#1c1c1c"/><path d="M4157,1520.8 h8 v-3 h12 v3 h12 v27 h-32Z" fill="#b8b8b8"/><rect x="3984" y="1596.1" width="521" height="2" fill="#1c1c1c"/><path d="M4157,1564.5 h8 v-3 h12 v3 h12 v27 h-32Z" fill="#b8b8b8"/><rect x="3984" y="1639.8" width="521" height="2" fill="#1c1c1c"/><path d="M4157,1608.2 h8 v-3 h12 v3 h12 v27 h-32Z" fill="#b8b8b8"/><rect x="3984" y="1683.6" width="521" height="2" fill="#1c1c1c"/><path d="M4114,1659.0 L4105,1667.0" stroke="none"/><path d="M4086,1659.0 L4094,1667.0 L4102,1659.0" stroke="#b8b8b8" stroke-width="2.5" fill="none"/><rect x="4111" y="1650.0" width="36" height="27" fill="#b8b8b8"/><rect x="4114" y="1646.0" width="12" height="3" fill="#b8b8b8"/><rect x="3984" y="1727.3" width="521" height="2" fill="#1c1c1c"/><path d="M4157,1695.8 h8 v-3 h12 v3 h12 v27 h-32Z" fill="#b8b8b8"/><rect x="3984" y="1771.1" width="521" height="2" fill="#1c1c1c"/><path d="M4157,1739.5 h8 v-3 h12 v3 h12 v27 h-32Z" fill="#b8b8b8"/></svg>
<div class="a t" style="left:40px;top:367.0px;line-height:40px;font-size:28px;color:#a6a6a6">* Animation Presets</div>
<div class="a t" style="left:136px;top:410.8px;line-height:40px;font-size:28px;color:#a6a6a6">Behaviors</div>
<div class="a t" style="left:136px;top:455.5px;line-height:40px;font-size:28px;color:#a6a6a6"><i style="font-family:Liberation Sans;font-size:25px;color:#232323">fx</i></div>
<div class="a t" style="left:179px;top:454.5px;line-height:40px;font-size:28px;color:#a6a6a6"><span style="color:#1a1a1a">Wiggle - gelatin</span></div>
<div class="a t" style="left:136px;top:499.2px;line-height:40px;font-size:28px;color:#a6a6a6"><i style="font-family:Liberation Sans;font-size:25px;color:#232323">fx</i></div>
<div class="a t" style="left:179px;top:498.2px;line-height:40px;font-size:28px;color:#a6a6a6">Wiggle - position</div>
<div class="a t" style="left:136px;top:543.0px;line-height:40px;font-size:28px;color:#a6a6a6"><i style="font-family:Liberation Sans;font-size:25px;color:#232323">fx</i></div>
<div class="a t" style="left:179px;top:542.0px;line-height:40px;font-size:28px;color:#a6a6a6">Wiggle - rotation</div>
<div class="a t" style="left:136px;top:586.8px;line-height:40px;font-size:28px;color:#a6a6a6"><i style="font-family:Liberation Sans;font-size:25px;color:#232323">fx</i></div>
<div class="a t" style="left:179px;top:585.8px;line-height:40px;font-size:28px;color:#a6a6a6">Wiggle - scale</div>
<div class="a t" style="left:136px;top:630.5px;line-height:40px;font-size:28px;color:#a6a6a6"><i style="font-family:Liberation Sans;font-size:25px;color:#232323">fx</i></div>
<div class="a t" style="left:179px;top:629.5px;line-height:40px;font-size:28px;color:#a6a6a6">Wiggle - shear</div>
<div class="a t" style="left:136px;top:674.2px;line-height:40px;font-size:28px;color:#a6a6a6"><i style="font-family:Liberation Sans;font-size:25px;color:#232323">fx</i></div>
<div class="a t" style="left:179px;top:673.2px;line-height:40px;font-size:28px;color:#a6a6a6">Wigglerama</div>
<div class="a t" style="left:136px;top:717.0px;line-height:40px;font-size:28px;color:#a6a6a6">Shapes</div>
<div class="a t" style="left:180px;top:760.8px;line-height:40px;font-size:28px;color:#a6a6a6">Elements</div>
<div class="a t" style="left:180px;top:805.5px;line-height:40px;font-size:28px;color:#a6a6a6"><i style="font-family:Liberation Sans;font-size:25px;color:#232323">fx</i></div>
<div class="a t" style="left:223px;top:804.5px;line-height:40px;font-size:28px;color:#a6a6a6">Wireframe Worm</div>
<div class="a t" style="left:180px;top:848.2px;line-height:40px;font-size:28px;color:#a6a6a6">Sprites - Animated</div>
<div class="a t" style="left:180px;top:893.0px;line-height:40px;font-size:28px;color:#a6a6a6"><i style="font-family:Liberation Sans;font-size:25px;color:#232323">fx</i></div>
<div class="a t" style="left:223px;top:892.0px;line-height:40px;font-size:28px;color:#a6a6a6">TwinkleStar</div>
<div class="a t" style="left:136px;top:935.8px;line-height:40px;font-size:28px;color:#a6a6a6">Text</div>
<div class="a t" style="left:180px;top:979.5px;line-height:40px;font-size:28px;color:#a6a6a6">3D Text</div>
<div class="a t" style="left:180px;top:1024.2px;line-height:40px;font-size:28px;color:#a6a6a6"><i style="font-family:Liberation Sans;font-size:25px;color:#232323">fx</i></div>
<div class="a t" style="left:223px;top:1023.2px;line-height:40px;font-size:28px;color:#a6a6a6">3D Swin...ound on Path</div>
<div class="a t" style="left:180px;top:1068.0px;line-height:40px;font-size:28px;color:#a6a6a6"><i style="font-family:Liberation Sans;font-size:25px;color:#232323">fx</i></div>
<div class="a t" style="left:223px;top:1067.0px;line-height:40px;font-size:28px;color:#a6a6a6">3D Twis...or Characters</div>
<div class="a t" style="left:180px;top:1110.8px;line-height:40px;font-size:28px;color:#a6a6a6">Animate In</div>
<div class="a t" style="left:180px;top:1155.5px;line-height:40px;font-size:28px;color:#a6a6a6"><i style="font-family:Liberation Sans;font-size:25px;color:#232323">fx</i></div>
<div class="a t" style="left:223px;top:1154.5px;line-height:40px;font-size:28px;color:#a6a6a6">Fly In With A Twist</div>
<div class="a t" style="left:180px;top:1199.2px;line-height:40px;font-size:28px;color:#a6a6a6"><i style="font-family:Liberation Sans;font-size:25px;color:#232323">fx</i></div>
<div class="a t" style="left:223px;top:1198.2px;line-height:40px;font-size:28px;color:#a6a6a6">Twirl On Each Line</div>
<div class="a t" style="left:180px;top:1243.0px;line-height:40px;font-size:28px;color:#a6a6a6"><i style="font-family:Liberation Sans;font-size:25px;color:#232323">fx</i></div>
<div class="a t" style="left:223px;top:1242.0px;line-height:40px;font-size:28px;color:#a6a6a6">Twirl On Each Word</div>
<div class="a t" style="left:180px;top:1286.8px;line-height:40px;font-size:28px;color:#a6a6a6"><i style="font-family:Liberation Sans;font-size:25px;color:#232323">fx</i></div>
<div class="a t" style="left:223px;top:1285.8px;line-height:40px;font-size:28px;color:#a6a6a6">Wipe In To Center</div>
<div class="a t" style="left:180px;top:1329.5px;line-height:40px;font-size:28px;color:#a6a6a6">Animate Out</div>
<div class="a t" style="left:180px;top:1374.2px;line-height:40px;font-size:28px;color:#a6a6a6"><i style="font-family:Liberation Sans;font-size:25px;color:#232323">fx</i></div>
<div class="a t" style="left:223px;top:1373.2px;line-height:40px;font-size:28px;color:#a6a6a6">Twirl Off Each Line</div>
<div class="a t" style="left:180px;top:1418.0px;line-height:40px;font-size:28px;color:#a6a6a6"><i style="font-family:Liberation Sans;font-size:25px;color:#232323">fx</i></div>
<div class="a t" style="left:223px;top:1417.0px;line-height:40px;font-size:28px;color:#a6a6a6">Twirl Off Each Word</div>
<div class="a t" style="left:31px;top:16.5px;line-height:40px;font-size:28px;color:#a6a6a6">Properties</div>
<div class="a t" style="left:31px;top:93.5px;line-height:40px;font-size:28px;color:#a6a6a6">Info</div>
<div class="a t" style="left:31px;top:170.2px;line-height:40px;font-size:28px;color:#a6a6a6">Audio</div>
<div class="a t" style="left:31px;top:246.9px;line-height:40px;font-size:28px;color:#d8d8d8">Effects &amp; Presets</div>
<div class="a t" style="left:87px;top:313.5px;line-height:40px;font-size:28px;color:#d8d8d8">wi</div>
</div>
<svg class="a" style="left:1191px;top:451px;overflow:hidden;background:#fff" width="2777" height="1237" viewBox="1191 451 2777 1237"><path d="M2262.0,451.0 C2262.0,451.0 2268.7,490.0 2275.0,511.0 C2281.3,532.0 2287.5,556.2 2300.0,577.0 C2312.5,597.8 2334.7,617.2 2350.0,636.0 C2365.3,654.8 2382.0,674.0 2392.0,690.0 C2402.0,706.0 2408.0,717.8 2410.0,732.0 C2412.0,746.2 2408.5,762.5 2404.0,775.0 C2399.5,787.5 2394.8,796.2 2383.0,807.0 C2371.2,817.8 2346.2,829.7 2333.0,840.0 C2319.8,850.3 2310.8,857.2 2304.0,869.0 C2297.2,880.8 2293.7,894.3 2292.0,911.0 C2290.3,927.7 2295.5,946.8 2294.0,969.0 C2292.5,991.2 2288.0,1023.5 2283.0,1044.0 C2278.0,1064.5 2271.3,1074.8 2264.0,1092.0 C2256.7,1109.2 2245.3,1129.3 2239.0,1147.0 C2232.7,1164.7 2228.8,1180.3 2226.0,1198.0 C2223.2,1215.7 2222.0,1236.0 2222.0,1253.0 C2222.0,1270.0 2223.2,1284.5 2226.0,1300.0 C2228.8,1315.5 2232.0,1331.8 2239.0,1346.0 C2246.0,1360.2 2258.8,1374.0 2268.0,1385.0 C2277.2,1396.0 2288.7,1392.8 2294.0,1412.0 C2299.3,1431.2 2300.0,1500.0 2300.0,1500.0 C2300.0,1500.0 3969.0,1500.0 3969.0,1500.0 C3969.0,1500.0 3969.0,451.0 3969.0,451.0 C3969.0,451.0 2262.0,451.0 2262.0,451.0Z" fill="#000"/><path d="M2540.0,449.0 C2540.0,449.0 2560.0,474.7 2570.0,485.0 C2580.0,495.3 2588.0,505.3 2600.0,511.0 C2612.0,516.7 2625.3,519.2 2642.0,519.0 C2658.7,518.8 2682.7,513.5 2700.0,510.0 C2717.3,506.5 2729.3,503.8 2746.0,498.0 C2762.7,492.2 2780.3,483.2 2800.0,475.0 C2819.7,466.8 2864.0,449.0 2864.0,449.0 C2864.0,449.0 2540.0,449.0 2540.0,449.0Z" fill="#fff"/><path d="M3470.0,449.0 C3470.0,449.0 3506.5,483.8 3525.0,502.0 C3543.5,520.2 3557.7,539.3 3581.0,558.0 C3604.3,576.7 3636.8,599.5 3665.0,614.0 C3693.2,628.5 3721.8,638.2 3750.0,645.0 C3778.2,651.8 3808.3,655.5 3834.0,655.0 C3859.7,654.5 3881.0,648.7 3904.0,642.0 C3927.0,635.3 3972.0,615.0 3972.0,615.0 C3972.0,615.0 3972.0,449.0 3972.0,449.0 C3972.0,449.0 3470.0,449.0 3470.0,449.0Z" fill="#fff"/><path d="M2196.0,1270.0 C2196.0,1270.0 2211.3,1280.0 2222.0,1287.0 C2232.7,1294.0 2243.2,1303.5 2260.0,1312.0 C2276.8,1320.5 2308.2,1329.5 2323.0,1338.0 C2337.8,1346.5 2342.7,1349.0 2349.0,1363.0 C2355.3,1377.0 2361.0,1422.0 2361.0,1422.0 C2361.0,1422.0 2368.3,1408.2 2374.0,1397.0 C2379.7,1385.8 2390.0,1370.5 2395.0,1355.0 C2400.0,1339.5 2404.0,1319.5 2404.0,1304.0 C2404.0,1288.5 2400.7,1273.7 2395.0,1262.0 C2389.3,1250.3 2370.0,1234.0 2370.0,1234.0 C2370.0,1234.0 2396.7,1254.8 2408.0,1270.0 C2419.3,1285.2 2432.3,1306.7 2438.0,1325.0 C2443.7,1343.3 2440.7,1365.8 2442.0,1380.0 C2443.3,1394.2 2446.0,1410.0 2446.0,1410.0 C2446.0,1410.0 2472.2,1403.2 2480.0,1389.0 C2487.8,1374.8 2493.7,1346.2 2493.0,1325.0 C2492.3,1303.8 2490.7,1282.8 2476.0,1262.0 C2461.3,1241.2 2405.0,1200.0 2405.0,1200.0 C2405.0,1200.0 2441.7,1192.8 2458.0,1195.0 C2474.3,1197.2 2490.5,1204.5 2503.0,1213.0 C2515.5,1221.5 2525.5,1230.0 2533.0,1246.0 C2540.5,1262.0 2548.0,1309.0 2548.0,1309.0 C2548.0,1309.0 2569.2,1297.0 2577.0,1285.0 C2584.8,1273.0 2590.5,1257.3 2595.0,1237.0 C2599.5,1216.7 2599.5,1185.3 2604.0,1163.0 C2608.5,1140.7 2611.5,1122.8 2622.0,1103.0 C2632.5,1083.2 2649.7,1061.3 2667.0,1044.0 C2684.3,1026.7 2704.7,1012.5 2726.0,999.0 C2747.3,985.5 2795.0,963.0 2795.0,963.0 C2795.0,963.0 2745.0,1015.7 2726.0,1038.0 C2707.0,1060.3 2690.3,1078.7 2681.0,1097.0 C2671.7,1115.3 2670.3,1133.2 2670.0,1148.0 C2669.7,1162.8 2674.7,1178.8 2679.0,1186.0 C2683.3,1193.2 2688.2,1194.8 2696.0,1191.0 C2703.8,1187.2 2718.0,1174.2 2726.0,1163.0 C2734.0,1151.8 2741.5,1135.5 2744.0,1124.0 C2746.5,1112.5 2745.5,1100.0 2741.0,1094.0 C2736.5,1088.0 2717.0,1088.0 2717.0,1088.0 C2717.0,1088.0 2744.5,1071.0 2756.0,1067.0 C2767.5,1063.0 2776.7,1060.5 2786.0,1064.0 C2795.3,1067.5 2808.2,1079.0 2812.0,1088.0 C2815.8,1097.0 2812.3,1108.0 2809.0,1118.0 C2805.7,1128.0 2795.3,1139.5 2792.0,1148.0 C2788.7,1156.5 2789.0,1169.0 2789.0,1169.0 C2789.0,1169.0 2805.7,1168.5 2815.0,1160.0 C2824.3,1151.5 2835.0,1134.8 2845.0,1118.0 C2855.0,1101.2 2864.0,1073.7 2875.0,1059.0 C2886.0,1044.3 2911.0,1030.0 2911.0,1030.0 C2911.0,1030.0 2897.0,1050.8 2893.0,1064.0 C2889.0,1077.2 2887.0,1109.0 2887.0,1109.0 C2887.0,1109.0 2914.8,1072.5 2925.0,1053.0 C2935.2,1033.5 2936.7,1011.7 2948.0,992.0 C2959.3,972.3 2974.3,955.0 2993.0,935.0 C3011.7,915.0 3042.8,890.8 3060.0,872.0 C3077.2,853.2 3090.7,843.0 3096.0,822.0 C3101.3,801.0 3092.0,746.0 3092.0,746.0 C3092.0,746.0 3107.0,779.0 3110.0,800.0 C3113.0,821.0 3116.0,848.0 3110.0,872.0 C3104.0,896.0 3089.8,923.7 3074.0,944.0 C3058.2,964.3 3027.5,979.0 3015.0,994.0 C3002.5,1009.0 2999.8,1021.3 2999.0,1034.0 C2998.2,1046.7 3003.5,1061.7 3010.0,1070.0 C3016.5,1078.3 3028.8,1084.0 3038.0,1084.0 C3047.2,1084.0 3059.0,1077.5 3065.0,1070.0 C3071.0,1062.5 3075.5,1051.0 3074.0,1039.0 C3072.5,1027.0 3056.0,998.0 3056.0,998.0 C3056.0,998.0 3082.3,1004.5 3092.0,1012.0 C3101.7,1019.5 3109.5,1031.0 3114.0,1043.0 C3118.5,1055.0 3113.7,1076.5 3119.0,1084.0 C3124.3,1091.5 3137.8,1091.0 3146.0,1088.0 C3154.2,1085.0 3163.5,1075.0 3168.0,1066.0 C3172.5,1057.0 3177.5,1046.0 3173.0,1034.0 C3168.5,1022.0 3148.2,1008.2 3141.0,994.0 C3133.8,979.8 3130.0,964.5 3130.0,949.0 C3130.0,933.5 3141.0,901.0 3141.0,901.0 C3141.0,901.0 3142.5,933.5 3150.0,949.0 C3157.5,964.5 3175.5,981.3 3186.0,994.0 C3196.5,1006.7 3207.7,1013.0 3213.0,1025.0 C3218.3,1037.0 3214.7,1057.0 3218.0,1066.0 C3221.3,1075.0 3233.0,1079.0 3233.0,1079.0 C3233.0,1079.0 3231.8,1067.5 3236.0,1057.0 C3240.2,1046.5 3254.0,1036.3 3258.0,1016.0 C3262.0,995.7 3256.2,957.5 3260.0,935.0 C3263.8,912.5 3270.3,899.3 3281.0,881.0 C3291.7,862.7 3324.0,825.0 3324.0,825.0 C3324.0,825.0 3301.0,858.7 3295.0,877.0 C3289.0,895.3 3288.0,914.0 3288.0,935.0 C3288.0,956.0 3292.8,985.0 3295.0,1003.0 C3297.2,1021.0 3301.0,1043.0 3301.0,1043.0 C3301.0,1043.0 3319.2,1009.0 3330.0,994.0 C3340.8,979.0 3353.5,968.5 3366.0,953.0 C3378.5,937.5 3405.0,901.0 3405.0,901.0 C3405.0,901.0 3382.2,937.5 3375.0,953.0 C3367.8,968.5 3363.8,980.2 3362.0,994.0 C3360.2,1007.8 3364.0,1036.0 3364.0,1036.0 C3364.0,1036.0 3388.8,1023.8 3402.0,1016.0 C3415.2,1008.2 3431.7,1001.0 3443.0,989.0 C3454.3,977.0 3465.2,963.5 3470.0,944.0 C3474.8,924.5 3472.0,872.0 3472.0,872.0 C3472.0,872.0 3485.0,917.0 3488.0,935.0 C3491.0,953.0 3492.3,961.2 3490.0,980.0 C3487.7,998.8 3477.3,1031.5 3474.0,1048.0 C3470.7,1064.5 3470.0,1079.0 3470.0,1079.0 C3470.0,1079.0 3489.2,1057.0 3502.0,1048.0 C3514.8,1039.0 3530.5,1031.0 3547.0,1025.0 C3563.5,1019.0 3578.5,1013.8 3601.0,1012.0 C3623.5,1010.2 3682.0,1014.0 3682.0,1014.0 C3682.0,1014.0 3641.8,1018.7 3623.0,1025.0 C3604.2,1031.3 3581.8,1043.7 3569.0,1052.0 C3556.2,1060.3 3549.0,1067.2 3546.0,1075.0 C3543.0,1082.8 3545.7,1095.0 3551.0,1099.0 C3556.3,1103.0 3566.7,1100.0 3578.0,1099.0 C3589.3,1098.0 3609.2,1093.7 3619.0,1093.0 C3628.8,1092.3 3629.5,1097.3 3637.0,1095.0 C3644.5,1092.7 3658.8,1086.8 3664.0,1079.0 C3669.2,1071.2 3668.0,1048.0 3668.0,1048.0 C3668.0,1048.0 3683.0,1068.5 3686.0,1079.0 C3689.0,1089.5 3686.0,1111.0 3686.0,1111.0 C3686.0,1111.0 3707.0,1081.8 3713.0,1066.0 C3719.0,1050.2 3723.5,1033.3 3722.0,1016.0 C3720.5,998.7 3711.5,975.8 3704.0,962.0 C3696.5,948.2 3677.0,933.0 3677.0,933.0 C3677.0,933.0 3710.0,941.8 3722.0,949.0 C3734.0,956.2 3742.3,964.8 3749.0,976.0 C3755.7,987.2 3761.2,1000.3 3762.0,1016.0 C3762.8,1031.7 3753.0,1047.5 3754.0,1070.0 C3755.0,1092.5 3757.0,1132.3 3768.0,1151.0 C3779.0,1169.7 3820.0,1182.0 3820.0,1182.0 C3820.0,1182.0 3814.8,1135.5 3815.0,1119.0 C3815.2,1102.5 3814.0,1090.8 3821.0,1083.0 C3828.0,1075.2 3839.7,1076.8 3857.0,1072.0 C3874.3,1067.2 3925.0,1054.0 3925.0,1054.0 C3925.0,1054.0 3882.5,1090.5 3873.0,1104.0 C3863.5,1117.5 3863.7,1118.5 3868.0,1135.0 C3872.3,1151.5 3899.0,1203.0 3899.0,1203.0 C3899.0,1203.0 3902.0,1171.5 3909.0,1161.0 C3916.0,1150.5 3930.5,1144.0 3941.0,1140.0 C3951.5,1136.0 3972.0,1137.0 3972.0,1137.0 C3972.0,1137.0 3972.0,1690.0 3972.0,1690.0 C3972.0,1690.0 2421.0,1690.0 2421.0,1690.0 C2421.0,1690.0 2360.5,1587.0 2340.0,1560.0 C2319.5,1533.0 2313.3,1532.2 2298.0,1528.0 C2282.7,1523.8 2264.5,1533.3 2248.0,1535.0 C2231.5,1536.7 2215.5,1540.7 2199.0,1538.0 C2182.5,1535.3 2165.5,1528.7 2149.0,1519.0 C2132.5,1509.3 2113.8,1490.8 2100.0,1480.0 C2086.2,1469.2 2066.0,1454.0 2066.0,1454.0 C2066.0,1454.0 2075.2,1449.7 2082.0,1452.0 C2088.8,1454.3 2095.8,1462.7 2107.0,1468.0 C2118.2,1473.3 2129.5,1482.0 2149.0,1484.0 C2168.5,1486.0 2203.3,1484.3 2224.0,1480.0 C2244.7,1475.7 2261.5,1467.2 2273.0,1458.0 C2284.5,1448.8 2290.3,1434.7 2293.0,1425.0 C2295.7,1415.3 2294.2,1407.5 2289.0,1400.0 C2283.8,1392.5 2273.2,1387.5 2262.0,1380.0 C2250.8,1372.5 2232.2,1366.3 2222.0,1355.0 C2211.8,1343.7 2205.3,1326.2 2201.0,1312.0 C2196.7,1297.8 2196.0,1270.0 2196.0,1270.0Z" fill="#ea2027"/><path d="M1962,1668 L1998,1692 L1962,1692Z" fill="#7e3580"/><path d="M2421.0,1562.0 C2421.0,1562.0 2514.2,1478.7 2560.0,1440.0 C2605.8,1401.3 2648.5,1361.3 2696.0,1330.0 C2743.5,1298.7 2802.7,1271.5 2845.0,1252.0 C2887.3,1232.5 2918.0,1222.0 2950.0,1213.0 C2982.0,1204.0 2996.3,1204.8 3037.0,1198.0 C3077.7,1191.2 3141.8,1176.3 3194.0,1172.0 C3246.2,1167.7 3297.8,1166.0 3350.0,1172.0 C3402.2,1178.0 3454.7,1192.3 3507.0,1208.0 C3559.3,1223.7 3611.8,1244.2 3664.0,1266.0 C3716.2,1287.8 3768.7,1314.2 3820.0,1339.0 C3871.3,1363.8 3972.0,1415.0 3972.0,1415.0 C3972.0,1415.0 3972.0,1692.0 3972.0,1692.0 C3972.0,1692.0 2436.0,1692.0 2436.0,1692.0 C2436.0,1692.0 2435.0,1651.0 2434.0,1634.0 C2433.0,1617.0 2432.2,1602.0 2430.0,1590.0 C2427.8,1578.0 2421.0,1562.0 2421.0,1562.0Z" fill="#e6c6de"/><path d="M2361.0,1453.0 C2361.0,1453.0 2366.0,1485.2 2372.0,1499.0 C2378.0,1512.8 2389.0,1524.8 2397.0,1536.0 C2405.0,1547.2 2414.2,1555.3 2420.0,1566.0 C2425.8,1576.7 2429.2,1579.0 2432.0,1600.0 C2434.8,1621.0 2437.0,1692.0 2437.0,1692.0 C2437.0,1692.0 2248.0,1692.0 2248.0,1692.0 C2248.0,1692.0 2249.7,1638.7 2252.0,1620.0 C2254.3,1601.3 2256.8,1592.2 2262.0,1580.0 C2267.2,1567.8 2273.3,1559.5 2283.0,1547.0 C2292.7,1534.5 2307.0,1520.7 2320.0,1505.0 C2333.0,1489.3 2361.0,1453.0 2361.0,1453.0Z" fill="#7e3580"/><path d="M2501.0,1598.0 C2501.0,1598.0 2498.3,1627.3 2497.0,1643.0 C2495.7,1658.7 2493.0,1692.0 2493.0,1692.0 C2493.0,1692.0 2444.0,1692.0 2444.0,1692.0 C2444.0,1692.0 2442.5,1655.7 2452.0,1640.0 C2461.5,1624.3 2501.0,1598.0 2501.0,1598.0Z" fill="#7e3580"/><path d="M2904.0,1692.0 C2904.0,1692.0 2904.5,1628.7 2908.0,1600.0 C2911.5,1571.3 2915.5,1540.8 2925.0,1520.0 C2934.5,1499.2 2946.3,1486.8 2965.0,1475.0 C2983.7,1463.2 2998.8,1454.3 3037.0,1449.0 C3075.2,1443.7 3150.5,1447.3 3194.0,1443.0 C3237.5,1438.7 3272.0,1428.7 3298.0,1423.0 C3324.0,1417.3 3328.2,1410.0 3350.0,1409.0 C3371.8,1408.0 3407.2,1410.3 3429.0,1417.0 C3450.8,1423.7 3465.3,1430.7 3481.0,1449.0 C3496.7,1467.3 3509.8,1486.5 3523.0,1527.0 C3536.2,1567.5 3560.0,1692.0 3560.0,1692.0 C3560.0,1692.0 2904.0,1692.0 2904.0,1692.0Z" fill="#fff"/><path d="M3830,1592 C3850,1640 3840,1680 3820,1692 L3800,1692 C3825,1660 3835,1630 3830,1592Z" fill="#fff"/><path d="M3925,1626 C3900,1650 3880,1675 3870,1692 L3900,1692 C3910,1670 3920,1650 3925,1626Z" fill="#fff"/><path d="M2683.0,1609.0 C2683.0,1609.0 2693.3,1573.5 2704.0,1558.0 C2714.7,1542.5 2729.3,1529.3 2747.0,1516.0 C2764.7,1502.7 2792.3,1485.2 2810.0,1478.0 C2827.7,1470.8 2838.0,1472.3 2853.0,1473.0 C2868.0,1473.7 2882.5,1476.2 2900.0,1482.0 C2917.5,1487.8 2943.8,1501.8 2958.0,1508.0 C2972.2,1514.2 2971.8,1522.0 2985.0,1519.0 C2998.2,1516.0 3022.3,1504.8 3037.0,1490.0 C3051.7,1475.2 3073.0,1430.0 3073.0,1430.0 C3073.0,1430.0 3080.7,1456.2 3079.0,1475.0 C3077.3,1493.8 3074.3,1525.7 3063.0,1543.0 C3051.7,1560.3 3028.5,1571.2 3011.0,1579.0 C2993.5,1586.8 2976.5,1593.2 2958.0,1590.0 C2939.5,1586.8 2921.2,1568.8 2900.0,1560.0 C2878.8,1551.2 2853.0,1538.7 2831.0,1537.0 C2809.0,1535.3 2785.5,1542.3 2768.0,1550.0 C2750.5,1557.7 2740.2,1573.2 2726.0,1583.0 C2711.8,1592.8 2683.0,1609.0 2683.0,1609.0Z" fill="#000"/><path d="M3345.0,1383.0 C3345.0,1383.0 3387.2,1416.5 3403.0,1428.0 C3418.8,1439.5 3427.0,1446.8 3440.0,1452.0 C3453.0,1457.2 3467.7,1460.2 3481.0,1459.0 C3494.3,1457.8 3507.0,1451.0 3520.0,1445.0 C3533.0,1439.0 3545.7,1429.7 3559.0,1423.0 C3572.3,1416.3 3586.8,1408.5 3600.0,1405.0 C3613.2,1401.5 3624.7,1399.5 3638.0,1402.0 C3651.3,1404.5 3667.0,1409.7 3680.0,1420.0 C3693.0,1430.3 3705.7,1444.5 3716.0,1464.0 C3726.3,1483.5 3742.0,1537.0 3742.0,1537.0 C3742.0,1537.0 3713.0,1508.7 3700.0,1500.0 C3687.0,1491.3 3679.0,1485.8 3664.0,1485.0 C3649.0,1484.2 3627.5,1489.7 3610.0,1495.0 C3592.5,1500.3 3577.8,1510.8 3559.0,1517.0 C3540.2,1523.2 3518.7,1532.0 3497.0,1532.0 C3475.3,1532.0 3446.8,1525.7 3429.0,1517.0 C3411.2,1508.3 3404.0,1502.3 3390.0,1480.0 C3376.0,1457.7 3345.0,1383.0 3345.0,1383.0Z" fill="#000"/><path d="M3517.0,1692.0 C3517.0,1692.0 3544.3,1670.0 3560.0,1660.0 C3575.7,1650.0 3589.3,1639.0 3611.0,1632.0 C3632.7,1625.0 3659.5,1616.3 3690.0,1618.0 C3720.5,1619.7 3794.0,1642.0 3794.0,1642.0 C3794.0,1642.0 3783.7,1659.7 3768.0,1668.0 C3752.3,1676.3 3700.0,1692.0 3700.0,1692.0 C3700.0,1692.0 3517.0,1692.0 3517.0,1692.0Z" fill="#000"/><path d="M3227.0,1577.0 C3227.0,1577.0 3253.7,1604.2 3262.0,1615.0 C3270.3,1625.8 3273.5,1629.2 3277.0,1642.0 C3280.5,1654.8 3283.0,1692.0 3283.0,1692.0 C3283.0,1692.0 3241.0,1692.0 3241.0,1692.0 C3241.0,1692.0 3253.3,1651.2 3251.0,1632.0 C3248.7,1612.8 3227.0,1577.0 3227.0,1577.0Z" fill="#000"/><path d="M2829,1690 V1623 H3087 V1690 M3445,1690 V1621 H3703 V1690" fill="none" stroke="#e07a9a" stroke-width="3" stroke-dasharray="3 3"/><circle cx="3005" cy="676" r="63" fill="#e6c6de"/><circle cx="3155" cy="742" r="62" fill="#e6c6de"/><circle cx="3346" cy="730" r="57" fill="#e6c6de"/><circle cx="3588" cy="724" r="55" fill="#e6c6de"/><circle cx="3688" cy="778" r="61" fill="#e6c6de"/><circle cx="3818" cy="755" r="55" fill="#e6c6de"/><circle cx="3489" cy="818" r="55" fill="#e6c6de"/><circle cx="3911" cy="901" r="55" fill="#e6c6de"/><circle cx="2705" cy="814" r="55.6" fill="#e6c6de"/><circle cx="2852" cy="820" r="55.6" fill="#e6c6de"/><circle cx="2521" cy="938" r="55.6" fill="#e6c6de"/><circle cx="2384" cy="1116" r="55.6" fill="#e6c6de"/><circle cx="2290" cy="1179" r="55.6" fill="#e6c6de"/><circle cx="2165" cy="1233" r="55.6" fill="#e6c6de"/><circle cx="2008" cy="1431" r="54" fill="#e6c6de" opacity="0.7"/><circle cx="2063" cy="1429" r="55" fill="none" stroke="#5a6fc0" stroke-width="2.5"/><rect x="1999" y="1372" width="21" height="21" fill="#555"/><rect x="1997" y="1370" width="21" height="21" fill="#6472c0"/><rect x="2052" y="1368" width="21" height="21" fill="#555"/><rect x="2050" y="1366" width="21" height="21" fill="#6472c0"/><rect x="2105" y="1366" width="21" height="21" fill="#555"/><rect x="2103" y="1364" width="21" height="21" fill="#6472c0"/><rect x="2006" y="1428" width="21" height="21" fill="#555"/><rect x="2004" y="1426" width="21" height="21" fill="#6472c0"/><rect x="2111" y="1419" width="21" height="21" fill="#555"/><rect x="2109" y="1417" width="21" height="21" fill="#6472c0"/><rect x="2011" y="1481" width="21" height="21" fill="#555"/><rect x="2009" y="1479" width="21" height="21" fill="#6472c0"/><rect x="2060" y="1474" width="21" height="21" fill="#555"/><rect x="2058" y="1472" width="21" height="21" fill="#6472c0"/><rect x="2114" y="1472" width="21" height="21" fill="#555"/><rect x="2112" y="1470" width="21" height="21" fill="#6472c0"/></svg>
<svg class="a" style="left:254px;top:1770px;clip-path:inset(0 0 0 0 round 0 0 15px 15px)" width="4286" height="897" viewBox="254 1770 4286 897"><rect x="321" y="1789" width="26" height="26" fill="#a8957a"/><rect x="698" y="1789" width="26" height="26" fill="#a8957a"/><path d="M899,1797 L911,1809 M911,1797 L899,1809" stroke="#9c9c9c" stroke-width="2.5"/><rect x="937" y="1789" width="26" height="26" fill="#a8957a"/><path d="M1080,1796 H1100 M1080,1803 H1100 M1080,1810 H1100" stroke="#b8b8b8" stroke-width="2.5"/><rect x="899" y="1829" width="201" height="5" rx="2" fill="#c8c8c8"/><rect x="513" y="1859" width="678" height="47" rx="5" fill="#141414" stroke="#2a2a2a" stroke-width="1.5"/><circle cx="549" cy="1876" r="9" fill="none" stroke="#c0c0c0" stroke-width="3"/><path d="M542,1883 L531,1895" stroke="#c0c0c0" stroke-width="3.5" stroke-linecap="round"/><path d="M561,1887 L571,1887 L566,1893Z" fill="#c0c0c0"/><path d="M1233,1873 H1240" stroke="#b8b8b8" stroke-width="2.5"/><rect x="1238" y="1869.5" width="17" height="8" rx="1" fill="#b8b8b8"/><path d="M1255,1873.5 H1258 M1254,1877 V1887 H1257" stroke="#b8b8b8" stroke-width="2.5" fill="none"/><rect x="1256" y="1870" width="14" height="8" rx="1" fill="#b8b8b8"/><rect x="1256" y="1883" width="14" height="8" rx="1" fill="#b8b8b8"/><path d="M1264,1894 L1275,1894 L1269.5,1900Z" fill="#b8b8b8"/><rect x="1319" y="1884" width="41" height="14" fill="#6e6e6e"/><path d="M1326,1883 Q1326,1866 1339.5,1866 Q1353,1866 1353,1883Z" fill="#b8b8b8"/><path d="M1320,1884 Q1322,1878 1327,1880 M1359,1884 Q1357,1878 1352,1880" stroke="#b8b8b8" stroke-width="2.5" fill="none"/><rect x="1336" y="1876" width="7" height="18" rx="3.5" fill="#b8b8b8"/><circle cx="1334" cy="1874" r="3" fill="#232323"/><circle cx="1345" cy="1874" r="3" fill="#232323"/><path d="M1389,1874 V1900 H1412" fill="none" stroke="#b8b8b8" stroke-width="3"/><rect x="1395" y="1869" width="5" height="28" fill="#b8b8b8"/><rect x="1400" y="1865" width="24" height="28" fill="#b8b8b8"/><path d="M1406,1879 h12" stroke="#232323" stroke-width="3"/><path d="M1403,1868 v3 M1403,1875 v3 M1403,1882 v3 M1403,1889 v2 M1421,1868 v3 M1421,1875 v3 M1421,1882 v3 M1421,1889 v2" stroke="#232323" stroke-width="2"/><circle cx="1463" cy="1891" r="8.5" fill="none" stroke="#3a8fe6" stroke-width="2.5"/><circle cx="1468" cy="1885" r="9" fill="#232323" stroke="#3a8fe6" stroke-width="2.5"/><circle cx="1477" cy="1877" r="11" fill="#1f5a9a" stroke="#3a8fe6" stroke-width="2.5"/><rect x="1544" y="1869" width="36" height="31" fill="none" stroke="#b8b8b8" stroke-width="3"/><path d="M1556,1863 v5 M1565,1863 v5 M1573,1863 v5 M1538,1874 h5 M1538,1883 h5 M1538,1892 h5" stroke="#b8b8b8" stroke-width="2"/><path d="M1549,1874 Q1556,1874 1561,1884 Q1566,1893 1575,1893" stroke="#b8b8b8" stroke-width="2.5" fill="none"/><rect x="258" y="1928" width="1366" height="2" fill="#1a1a1a"/><path d="M272,1956 Q285,1944 298,1956 Q285,1968 272,1956Z" fill="#b8b8b8"/><circle cx="285" cy="1956" r="5" fill="#232323"/><circle cx="285" cy="1956" r="2.5" fill="#b8b8b8"/><path d="M309,1950 h7 l9,-9 v30 l-9,-9 h-7Z" fill="#b8b8b8"/><path d="M329,1948 Q334,1956 329,1964 M333,1943 Q341,1956 333,1969" stroke="#b8b8b8" stroke-width="2.5" fill="none"/><circle cx="361" cy="1956" r="9" fill="#b8b8b8"/><path d="M393,1953 v-6 a7,7 0 0 1 14,0 v6" stroke="#b8b8b8" stroke-width="3" fill="none"/><rect x="388" y="1953" width="24" height="17" rx="2" fill="#b8b8b8"/><rect x="398" y="1958" width="4" height="7" fill="#232323"/><rect x="428.5" y="1942" width="3" height="28" fill="#0e0e0e"/><rect x="510.5" y="1942" width="3" height="28" fill="#0e0e0e"/><rect x="595.5" y="1942" width="3" height="28" fill="#0e0e0e"/><rect x="929.1" y="1942" width="3" height="28" fill="#0e0e0e"/><rect x="1280.1" y="1942" width="3" height="28" fill="#0e0e0e"/><rect x="1580.5" y="1942" width="3" height="28" fill="#0e0e0e"/><path d="M467,1944 L482,1944 L497,1958 L482,1973 L467,1958Z" fill="#b8b8b8"/><circle cx="474" cy="1951" r="3" fill="#232323"/><path d="M948,1956 Q948,1941 958,1941 Q968,1941 968,1956 Q970,1956 970,1959 L946,1959 Q946,1956 948,1956Z" fill="#b8b8b8"/><circle cx="954" cy="1949" r="3" fill="#232323"/><circle cx="962" cy="1949" r="3" fill="#232323"/><rect x="955" y="1953" width="6" height="14" rx="3" fill="#b8b8b8"/><path d="M943,1964 h10 M963,1964 h10" stroke="#b8b8b8" stroke-width="2.5"/><circle cx="997" cy="1956" r="6" fill="none" stroke="#8a8a8a" stroke-width="2.5"/><path d="M1006.0,1956.0 L1010.0,1956.0" stroke="#8a8a8a" stroke-width="2.5"/><path d="M1003.4,1962.4 L1006.2,1965.2" stroke="#8a8a8a" stroke-width="2.5"/><path d="M997.0,1965.0 L997.0,1969.0" stroke="#8a8a8a" stroke-width="2.5"/><path d="M990.6,1962.4 L987.8,1965.2" stroke="#8a8a8a" stroke-width="2.5"/><path d="M988.0,1956.0 L984.0,1956.0" stroke="#8a8a8a" stroke-width="2.5"/><path d="M990.6,1949.6 L987.8,1946.8" stroke="#8a8a8a" stroke-width="2.5"/><path d="M997.0,1947.0 L997.0,1943.0" stroke="#8a8a8a" stroke-width="2.5"/><path d="M1003.4,1949.6 L1006.2,1946.8" stroke="#8a8a8a" stroke-width="2.5"/><path d="M1022,1943 L1048,1969" stroke="#b8b8b8" stroke-width="3.5" stroke-dasharray="4 3"/><rect x="1099" y="1940" width="28" height="28" fill="#b8b8b8"/><path d="M1096,1944 V1972 H1124" stroke="#b8b8b8" stroke-width="2.5" fill="none"/><path d="M1105,1954 h16" stroke="#232323" stroke-width="4"/><path d="M1102,1944 v4 M1102,1960 v4 M1124,1944 v4 M1124,1960 v4" stroke="#232323" stroke-width="2.5"/><circle cx="1145" cy="1963" r="9" fill="none" stroke="#b8b8b8" stroke-width="2.5"/><circle cx="1149" cy="1959" r="9" fill="#2a2a2a" stroke="#b8b8b8" stroke-width="2.5"/><circle cx="1155" cy="1952" r="11" fill="#7a7a7a" stroke="#b8b8b8" stroke-width="2.5"/><circle cx="1190" cy="1956" r="12" fill="none" stroke="#b8b8b8" stroke-width="3"/><path d="M1199,1947 A12,12 0 0 1 1181,1965Z" fill="#b8b8b8"/><path d="M1227,1944 L1239,1950 V1963 L1227,1969 L1215,1963 V1950Z M1215,1950 L1227,1956 L1239,1950 M1227,1956 V1969" fill="none" stroke="#b8b8b8" stroke-width="2.5"/><rect x="258" y="1974.2" width="1366" height="43.6" fill="#2a2a2a"/><rect x="258" y="2015.8" width="1366" height="2.2" fill="#1a1a1a"/><rect x="268" y="1979.5" width="33" height="33" fill="#1a1a1a"/><path d="M272,1996.0 Q285,1984.0 298,1996.0 Q285,2008.0 272,1996.0Z" fill="#b8b8b8"/><circle cx="285" cy="1996.0" r="5" fill="#1a1a1a"/><circle cx="285" cy="1996.0" r="2.5" fill="#b8b8b8"/><rect x="345" y="1979.5" width="33" height="33" fill="#1c1c1c"/><rect x="383" y="1979.5" width="33" height="33" fill="#1c1c1c"/><path d="M447,1987.0 L456,1996.0 L447,2005.0" stroke="#b8b8b8" stroke-width="2.5" fill="none"/><rect x="475" y="1981.0" width="31" height="30" fill="#6b73c0"/><path d="M620,1982.0 L624,1992.0 L635,1992.0 L626,1999.0 L629,2010.0 L620,2003.0 L611,2010.0 L614,1999.0 L605,1992.0 L616,1992.0Z" fill="#b8b8b8"/><rect x="942" y="1979.5" width="33" height="33" fill="#1c1c1c"/><rect x="980.5" y="1979.5" width="33" height="33" fill="#1c1c1c"/><rect x="1019" y="1979.5" width="33" height="33" fill="#1c1c1c"/><rect x="1134.6" y="1979.5" width="33" height="33" fill="#1c1c1c"/><rect x="1173" y="1979.5" width="33" height="33" fill="#1c1c1c"/><rect x="1211" y="1979.5" width="33" height="33" fill="#1c1c1c"/><path d="M948.5,1996.0 Q948.5,1981.0 958.5,1981.0 Q968.5,1981.0 968.5,1996.0 Q970.5,1996.0 970.5,1999.0 L946.5,1999.0 Q946.5,1996.0 948.5,1996.0Z" fill="#b8b8b8"/><circle cx="954.5" cy="1989.0" r="3" fill="#232323"/><circle cx="962.5" cy="1989.0" r="3" fill="#232323"/><rect x="955.5" y="1993.0" width="6" height="14" rx="3" fill="#b8b8b8"/><path d="M943.5,2004.0 h10 M963.5,2004.0 h10" stroke="#b8b8b8" stroke-width="2.5"/><circle cx="997" cy="1996.0" r="6" fill="none" stroke="#8a8a8a" stroke-width="2.5"/><path d="M1006.0,1996.0 L1010.0,1996.0" stroke="#8a8a8a" stroke-width="2.5"/><path d="M1003.4,2002.4 L1006.2,2005.2" stroke="#8a8a8a" stroke-width="2.5"/><path d="M997.0,2005.0 L997.0,2009.0" stroke="#8a8a8a" stroke-width="2.5"/><path d="M990.6,2002.4 L987.8,2005.2" stroke="#8a8a8a" stroke-width="2.5"/><path d="M988.0,1996.0 L984.0,1996.0" stroke="#8a8a8a" stroke-width="2.5"/><path d="M990.6,1989.6 L987.8,1986.8" stroke="#8a8a8a" stroke-width="2.5"/><path d="M997.0,1987.0 L997.0,1983.0" stroke="#8a8a8a" stroke-width="2.5"/><path d="M1003.4,1989.6 L1006.2,1986.8" stroke="#8a8a8a" stroke-width="2.5"/><path d="M1023,2009.0 L1047,1983.0" stroke="#b8b8b8" stroke-width="3"/><circle cx="1145" cy="2003.0" r="9" fill="none" stroke="#b8b8b8" stroke-width="2.5"/><circle cx="1149" cy="1999.0" r="9" fill="#2a2a2a" stroke="#b8b8b8" stroke-width="2.5"/><circle cx="1155" cy="1992.0" r="11" fill="#7a7a7a" stroke="#b8b8b8" stroke-width="2.5"/><path d="M1310.5,1980.7 L1312.5,1981.4 L1314.3,1982.3 L1316.0,1983.5 L1317.5,1984.9 L1318.7,1986.4 L1319.7,1988.2 L1320.4,1990.0 L1320.9,1991.9 L1321.0,1993.8 L1320.9,1995.6 L1320.5,1997.5 L1319.9,1999.2 L1319.0,2000.8 L1318.0,2002.2 L1316.7,2003.5 L1315.3,2004.5 L1313.8,2005.3 L1312.2,2005.9 L1310.5,2006.2 L1308.8,2006.3 L1307.2,2006.2 L1305.7,2005.8 L1304.2,2005.2 L1302.8,2004.4 L1301.6,2003.4 L1300.6,2002.3 L1299.7,2001.1 L1299.1,1999.7 L1298.6,1998.4 L1298.4,1996.9 L1298.4,1995.5 L1298.6,1994.2 L1298.9,1992.8 L1299.5,1991.6 L1300.2,1990.5 L1301.1,1989.5 L1302.0,1988.7 L1303.1,1988.0 L1304.2,1987.5 L1305.4,1987.2 L1306.6,1987.1 L1307.7,1987.1 L1308.8,1987.3 L1309.9,1987.7 L1310.9,1988.2 L1311.8,1988.8 L1312.5,1989.5 L1313.1,1990.3 L1313.6,1991.2 L1314.0,1992.1 L1314.2,1993.1 L1314.2,1994.0 L1314.2,1994.9 L1314.0,1995.8 L1313.6,1996.6 L1313.2,1997.3 L1312.7,1998.0 L1312.1,1998.5 L1311.4,1998.9 L1310.8,1999.3 L1310.0,1999.5 L1309.3,1999.6 L1308.6,1999.6 L1308.0,1999.4 L1307.4,1999.2 L1306.8,1999.0 L1306.3,1998.6 L1305.9,1998.2 L1305.6,1997.7 L1305.3,1997.2" fill="none" stroke="#b8b8b8" stroke-width="2.6" stroke-linecap="round"/><rect x="1342" y="1979.5" width="228" height="33" fill="#181818"/><path d="M1540,1992.0 L1548,2000.0 L1556,1992.0" stroke="#c8c8c8" stroke-width="2.5" fill="none"/><rect x="258" y="2017.8" width="1366" height="43.6" fill="#2a2a2a"/><rect x="258" y="2059.4" width="1366" height="2.2" fill="#1a1a1a"/><rect x="268" y="2023.1" width="33" height="33" fill="#1a1a1a"/><path d="M272,2039.58 Q285,2027.58 298,2039.58 Q285,2051.58 272,2039.58Z" fill="#b8b8b8"/><circle cx="285" cy="2039.58" r="5" fill="#1a1a1a"/><circle cx="285" cy="2039.58" r="2.5" fill="#b8b8b8"/><rect x="345" y="2023.1" width="33" height="33" fill="#1c1c1c"/><rect x="383" y="2023.1" width="33" height="33" fill="#1c1c1c"/><path d="M447,2030.6 L456,2039.6 L447,2048.6" stroke="#b8b8b8" stroke-width="2.5" fill="none"/><rect x="475" y="2024.6" width="31" height="30" fill="#6b73c0"/><path d="M620,2025.6 L624,2035.6 L635,2035.6 L626,2042.6 L629,2053.6 L620,2046.6 L611,2053.6 L614,2042.6 L605,2035.6 L616,2035.6Z" fill="#b8b8b8"/><rect x="942" y="2023.1" width="33" height="33" fill="#1c1c1c"/><rect x="980.5" y="2023.1" width="33" height="33" fill="#1c1c1c"/><rect x="1019" y="2023.1" width="33" height="33" fill="#1c1c1c"/><rect x="1134.6" y="2023.1" width="33" height="33" fill="#1c1c1c"/><rect x="1173" y="2023.1" width="33" height="33" fill="#1c1c1c"/><rect x="1211" y="2023.1" width="33" height="33" fill="#1c1c1c"/><path d="M948.5,2039.58 Q948.5,2024.58 958.5,2024.58 Q968.5,2024.58 968.5,2039.58 Q970.5,2039.58 970.5,2042.58 L946.5,2042.58 Q946.5,2039.58 948.5,2039.58Z" fill="#b8b8b8"/><circle cx="954.5" cy="2032.58" r="3" fill="#232323"/><circle cx="962.5" cy="2032.58" r="3" fill="#232323"/><rect x="955.5" y="2036.58" width="6" height="14" rx="3" fill="#b8b8b8"/><path d="M943.5,2047.58 h10 M963.5,2047.58 h10" stroke="#b8b8b8" stroke-width="2.5"/><circle cx="997" cy="2039.58" r="6" fill="none" stroke="#8a8a8a" stroke-width="2.5"/><path d="M1006.0,2039.6 L1010.0,2039.6" stroke="#8a8a8a" stroke-width="2.5"/><path d="M1003.4,2045.9 L1006.2,2048.8" stroke="#8a8a8a" stroke-width="2.5"/><path d="M997.0,2048.6 L997.0,2052.6" stroke="#8a8a8a" stroke-width="2.5"/><path d="M990.6,2045.9 L987.8,2048.8" stroke="#8a8a8a" stroke-width="2.5"/><path d="M988.0,2039.6 L984.0,2039.6" stroke="#8a8a8a" stroke-width="2.5"/><path d="M990.6,2033.2 L987.8,2030.4" stroke="#8a8a8a" stroke-width="2.5"/><path d="M997.0,2030.6 L997.0,2026.6" stroke="#8a8a8a" stroke-width="2.5"/><path d="M1003.4,2033.2 L1006.2,2030.4" stroke="#8a8a8a" stroke-width="2.5"/><path d="M1023,2052.6 L1047,2026.6" stroke="#b8b8b8" stroke-width="3"/><circle cx="1145" cy="2046.58" r="9" fill="none" stroke="#b8b8b8" stroke-width="2.5"/><circle cx="1149" cy="2042.58" r="9" fill="#2a2a2a" stroke="#b8b8b8" stroke-width="2.5"/><circle cx="1155" cy="2035.58" r="11" fill="#7a7a7a" stroke="#b8b8b8" stroke-width="2.5"/><path d="M1310.5,2024.3 L1312.5,2025.0 L1314.3,2025.9 L1316.0,2027.1 L1317.5,2028.5 L1318.7,2030.0 L1319.7,2031.7 L1320.4,2033.6 L1320.9,2035.4 L1321.0,2037.3 L1320.9,2039.2 L1320.5,2041.0 L1319.9,2042.8 L1319.0,2044.4 L1318.0,2045.8 L1316.7,2047.1 L1315.3,2048.1 L1313.8,2048.9 L1312.2,2049.5 L1310.5,2049.8 L1308.8,2049.9 L1307.2,2049.8 L1305.7,2049.4 L1304.2,2048.8 L1302.8,2048.0 L1301.6,2047.0 L1300.6,2045.9 L1299.7,2044.7 L1299.1,2043.3 L1298.6,2041.9 L1298.4,2040.5 L1298.4,2039.1 L1298.6,2037.7 L1298.9,2036.4 L1299.5,2035.2 L1300.2,2034.1 L1301.1,2033.1 L1302.0,2032.3 L1303.1,2031.6 L1304.2,2031.1 L1305.4,2030.8 L1306.6,2030.7 L1307.7,2030.7 L1308.8,2030.9 L1309.9,2031.2 L1310.9,2031.7 L1311.8,2032.4 L1312.5,2033.1 L1313.1,2033.9 L1313.6,2034.8 L1314.0,2035.7 L1314.2,2036.6 L1314.2,2037.6 L1314.2,2038.5 L1314.0,2039.4 L1313.6,2040.2 L1313.2,2040.9 L1312.7,2041.5 L1312.1,2042.1 L1311.4,2042.5 L1310.8,2042.8 L1310.0,2043.0 L1309.3,2043.1 L1308.6,2043.1 L1308.0,2043.0 L1307.4,2042.8 L1306.8,2042.5 L1306.3,2042.2 L1305.9,2041.8 L1305.6,2041.3 L1305.3,2040.8" fill="none" stroke="#b8b8b8" stroke-width="2.6" stroke-linecap="round"/><rect x="1342" y="2023.1" width="228" height="33" fill="#181818"/><path d="M1540,2035.6 L1548,2043.6 L1556,2035.6" stroke="#c8c8c8" stroke-width="2.5" fill="none"/><rect x="258" y="2061.4" width="1366" height="43.6" fill="#404040"/><rect x="258" y="2103.0" width="1366" height="2.2" fill="#1a1a1a"/><rect x="1572" y="2061.4" width="50" height="41.6" fill="#2e2e2e"/><rect x="268" y="2066.7" width="33" height="33" fill="#1a1a1a"/><path d="M272,2083.16 Q285,2071.16 298,2083.16 Q285,2095.16 272,2083.16Z" fill="#b8b8b8"/><circle cx="285" cy="2083.16" r="5" fill="#1a1a1a"/><circle cx="285" cy="2083.16" r="2.5" fill="#b8b8b8"/><rect x="345" y="2066.7" width="33" height="33" fill="#2e2e2e"/><rect x="383" y="2066.7" width="33" height="33" fill="#2e2e2e"/><path d="M447,2079.2 L456,2088.2 L465,2079.2" stroke="#b8b8b8" stroke-width="2.5" fill="none"/><rect x="475" y="2068.2" width="31" height="30" fill="#6b73c0"/><path d="M620,2069.2 L624,2079.2 L635,2079.2 L626,2086.2 L629,2097.2 L620,2090.2 L611,2097.2 L614,2086.2 L605,2079.2 L616,2079.2Z" fill="#b8b8b8"/><rect x="646" y="2063.2" width="282" height="40" fill="none" stroke="#b0b0b0" stroke-width="3"/><rect x="942" y="2066.7" width="33" height="33" fill="#2e2e2e"/><rect x="980.5" y="2066.7" width="33" height="33" fill="#2e2e2e"/><rect x="1019" y="2066.7" width="33" height="33" fill="#2e2e2e"/><rect x="1057.5" y="2066.7" width="33" height="33" fill="#2e2e2e"/><rect x="1134.6" y="2066.7" width="33" height="33" fill="#2e2e2e"/><rect x="1173" y="2066.7" width="33" height="33" fill="#2e2e2e"/><rect x="1211" y="2066.7" width="33" height="33" fill="#2e2e2e"/><path d="M948.5,2083.16 Q948.5,2068.16 958.5,2068.16 Q968.5,2068.16 968.5,2083.16 Q970.5,2083.16 970.5,2086.16 L946.5,2086.16 Q946.5,2083.16 948.5,2083.16Z" fill="#b8b8b8"/><circle cx="954.5" cy="2076.16" r="3" fill="#232323"/><circle cx="962.5" cy="2076.16" r="3" fill="#232323"/><rect x="955.5" y="2080.16" width="6" height="14" rx="3" fill="#b8b8b8"/><path d="M943.5,2091.16 h10 M963.5,2091.16 h10" stroke="#b8b8b8" stroke-width="2.5"/><circle cx="997" cy="2083.16" r="6" fill="none" stroke="#8a8a8a" stroke-width="2.5"/><path d="M1006.0,2083.2 L1010.0,2083.2" stroke="#8a8a8a" stroke-width="2.5"/><path d="M1003.4,2089.5 L1006.2,2092.4" stroke="#8a8a8a" stroke-width="2.5"/><path d="M997.0,2092.2 L997.0,2096.2" stroke="#8a8a8a" stroke-width="2.5"/><path d="M990.6,2089.5 L987.8,2092.4" stroke="#8a8a8a" stroke-width="2.5"/><path d="M988.0,2083.2 L984.0,2083.2" stroke="#8a8a8a" stroke-width="2.5"/><path d="M990.6,2076.8 L987.8,2074.0" stroke="#8a8a8a" stroke-width="2.5"/><path d="M997.0,2074.2 L997.0,2070.2" stroke="#8a8a8a" stroke-width="2.5"/><path d="M1003.4,2076.8 L1006.2,2074.0" stroke="#8a8a8a" stroke-width="2.5"/><path d="M1023,2096.2 L1047,2070.2" stroke="#b8b8b8" stroke-width="3"/><circle cx="1145" cy="2090.16" r="9" fill="none" stroke="#b8b8b8" stroke-width="2.5"/><circle cx="1149" cy="2086.16" r="9" fill="#2a2a2a" stroke="#b8b8b8" stroke-width="2.5"/><circle cx="1155" cy="2079.16" r="11" fill="#7a7a7a" stroke="#b8b8b8" stroke-width="2.5"/><path d="M1310.5,2067.9 L1312.5,2068.5 L1314.3,2069.5 L1316.0,2070.6 L1317.5,2072.0 L1318.7,2073.6 L1319.7,2075.3 L1320.4,2077.1 L1320.9,2079.0 L1321.0,2080.9 L1320.9,2082.8 L1320.5,2084.6 L1319.9,2086.4 L1319.0,2088.0 L1318.0,2089.4 L1316.7,2090.6 L1315.3,2091.7 L1313.8,2092.5 L1312.2,2093.1 L1310.5,2093.4 L1308.8,2093.5 L1307.2,2093.3 L1305.7,2092.9 L1304.2,2092.4 L1302.8,2091.6 L1301.6,2090.6 L1300.6,2089.5 L1299.7,2088.2 L1299.1,2086.9 L1298.6,2085.5 L1298.4,2084.1 L1298.4,2082.7 L1298.6,2081.3 L1298.9,2080.0 L1299.5,2078.8 L1300.2,2077.7 L1301.1,2076.7 L1302.0,2075.9 L1303.1,2075.2 L1304.2,2074.7 L1305.4,2074.4 L1306.6,2074.2 L1307.7,2074.3 L1308.8,2074.5 L1309.9,2074.8 L1310.9,2075.3 L1311.8,2075.9 L1312.5,2076.7 L1313.1,2077.5 L1313.6,2078.4 L1314.0,2079.3 L1314.2,2080.2 L1314.2,2081.2 L1314.2,2082.1 L1314.0,2082.9 L1313.6,2083.7 L1313.2,2084.5 L1312.7,2085.1 L1312.1,2085.7 L1311.4,2086.1 L1310.8,2086.4 L1310.0,2086.6 L1309.3,2086.7 L1308.6,2086.7 L1308.0,2086.6 L1307.4,2086.4 L1306.8,2086.1 L1306.3,2085.8 L1305.9,2085.3 L1305.6,2084.9 L1305.3,2084.4" fill="none" stroke="#b8b8b8" stroke-width="2.6" stroke-linecap="round"/><rect x="1342" y="2066.7" width="228" height="33" fill="#181818"/><path d="M1540,2079.2 L1548,2087.2 L1556,2079.2" stroke="#c8c8c8" stroke-width="2.5" fill="none"/><rect x="258" y="2104.9" width="1366" height="43.6" fill="#232323"/><rect x="258" y="2146.5" width="1366" height="2.2" fill="#1a1a1a"/><path d="M491,2122.7 L499,2130.7 L507,2122.7" stroke="#b8b8b8" stroke-width="2.5" fill="none"/><rect x="258" y="2148.5" width="1366" height="43.6" fill="#232323"/><rect x="258" y="2190.1" width="1366" height="2.2" fill="#1a1a1a"/><rect x="267.5" y="2153.8" width="33" height="33" fill="#161616"/><path d="M535,2166.3 L543,2174.3 L551,2166.3" stroke="#b8b8b8" stroke-width="2.5" fill="none"/><rect x="258" y="2192.1" width="1366" height="43.6" fill="#232323"/><rect x="258" y="2233.7" width="1366" height="2.2" fill="#1a1a1a"/><path d="M290,2205.9 L276,2213.9 L290,2221.9Z M356,2205.9 L370,2213.9 L356,2221.9Z" fill="#b8b8b8"/><path d="M322,2203.9 L332,2213.9 L322,2223.9 L312,2213.9Z" fill="#454545" stroke="#b8b8b8" stroke-width="2.5"/><rect x="607" y="2194.4" width="39" height="39" fill="#1c1c1c" stroke="#2a2a2a" stroke-width="1"/><circle cx="625.5" cy="2215.9" r="12" fill="none" stroke="#3a8fe6" stroke-width="2.6"/><path d="M620.5,2199.9 H630.5 M625.5,2199.9 V2203.9" stroke="#3a8fe6" stroke-width="2.6"/><path d="M612.5,2205.9 L617.5,2201.9 L612.5,2209.9Z" fill="#3a8fe6"/><path d="M625.5,2215.9 L631.5,2208.9" stroke="#3a8fe6" stroke-width="2.6"/><path d="M659,2202.9 V2225.9 H686 M662,2219.9 L668,2207.9 L674,2216.9 L682,2205.9" stroke="#b8b8b8" stroke-width="2.5" fill="none"/><path d="M1343.5,2198.6 L1345.5,2199.3 L1347.3,2200.2 L1349.0,2201.4 L1350.5,2202.8 L1351.7,2204.3 L1352.7,2206.1 L1353.4,2207.9 L1353.9,2209.8 L1354.0,2211.7 L1353.9,2213.5 L1353.5,2215.4 L1352.9,2217.1 L1352.0,2218.7 L1351.0,2220.1 L1349.7,2221.4 L1348.3,2222.4 L1346.8,2223.2 L1345.2,2223.8 L1343.5,2224.1 L1341.8,2224.2 L1340.2,2224.1 L1338.7,2223.7 L1337.2,2223.1 L1335.8,2222.3 L1334.6,2221.3 L1333.6,2220.2 L1332.7,2219.0 L1332.1,2217.6 L1331.6,2216.3 L1331.4,2214.8 L1331.4,2213.4 L1331.6,2212.1 L1331.9,2210.7 L1332.5,2209.5 L1333.2,2208.4 L1334.1,2207.4 L1335.0,2206.6 L1336.1,2205.9 L1337.2,2205.4 L1338.4,2205.1 L1339.6,2205.0 L1340.7,2205.0 L1341.8,2205.2 L1342.9,2205.6 L1343.9,2206.1 L1344.8,2206.7 L1345.5,2207.4 L1346.1,2208.2 L1346.6,2209.1 L1347.0,2210.0 L1347.2,2211.0 L1347.2,2211.9 L1347.2,2212.8 L1347.0,2213.7 L1346.6,2214.5 L1346.2,2215.2 L1345.7,2215.9 L1345.1,2216.4 L1344.4,2216.8 L1343.8,2217.2 L1343.0,2217.4 L1342.3,2217.5 L1341.6,2217.5 L1341.0,2217.3 L1340.4,2217.1 L1339.8,2216.9 L1339.3,2216.5 L1338.9,2216.1 L1338.6,2215.6 L1338.3,2215.1" fill="none" stroke="#b8b8b8" stroke-width="2.6" stroke-linecap="round"/><rect x="258" y="2235.7" width="1366" height="43.6" fill="#232323"/><rect x="258" y="2277.3" width="1366" height="2.2" fill="#1a1a1a"/><rect x="267.5" y="2241.0" width="33" height="33" fill="#161616"/><path d="M535,2253.5 L543,2261.5 L551,2253.5" stroke="#b8b8b8" stroke-width="2.5" fill="none"/><rect x="565" y="2237.5" width="367" height="40" fill="#4a4a4a"/><rect x="258" y="2279.3" width="1366" height="43.6" fill="#232323"/><rect x="258" y="2320.9" width="1366" height="2.2" fill="#1a1a1a"/><circle cx="625.5" cy="2303.06" r="12" fill="none" stroke="#b8b8b8" stroke-width="2.6"/><path d="M620.5,2287.06 H630.5 M625.5,2287.06 V2291.06" stroke="#b8b8b8" stroke-width="2.6"/><path d="M612.5,2293.06 L617.5,2289.06 L612.5,2297.06Z" fill="#b8b8b8"/><path d="M1343.5,2285.8 L1345.5,2286.4 L1347.3,2287.4 L1349.0,2288.5 L1350.5,2289.9 L1351.7,2291.5 L1352.7,2293.2 L1353.4,2295.0 L1353.9,2296.9 L1354.0,2298.8 L1353.9,2300.7 L1353.5,2302.5 L1352.9,2304.3 L1352.0,2305.9 L1351.0,2307.3 L1349.7,2308.5 L1348.3,2309.6 L1346.8,2310.4 L1345.2,2311.0 L1343.5,2311.3 L1341.8,2311.4 L1340.2,2311.2 L1338.7,2310.8 L1337.2,2310.3 L1335.8,2309.5 L1334.6,2308.5 L1333.6,2307.4 L1332.7,2306.1 L1332.1,2304.8 L1331.6,2303.4 L1331.4,2302.0 L1331.4,2300.6 L1331.6,2299.2 L1331.9,2297.9 L1332.5,2296.7 L1333.2,2295.6 L1334.1,2294.6 L1335.0,2293.8 L1336.1,2293.1 L1337.2,2292.6 L1338.4,2292.3 L1339.6,2292.1 L1340.7,2292.2 L1341.8,2292.4 L1342.9,2292.7 L1343.9,2293.2 L1344.8,2293.8 L1345.5,2294.6 L1346.1,2295.4 L1346.6,2296.3 L1347.0,2297.2 L1347.2,2298.1 L1347.2,2299.1 L1347.2,2300.0 L1347.0,2300.8 L1346.6,2301.6 L1346.2,2302.4 L1345.7,2303.0 L1345.1,2303.6 L1344.4,2304.0 L1343.8,2304.3 L1343.0,2304.5 L1342.3,2304.6 L1341.6,2304.6 L1341.0,2304.5 L1340.4,2304.3 L1339.8,2304.0 L1339.3,2303.7 L1338.9,2303.2 L1338.6,2302.8 L1338.3,2302.3" fill="none" stroke="#b8b8b8" stroke-width="2.6" stroke-linecap="round"/><rect x="258" y="2322.8" width="1366" height="43.6" fill="#232323"/><rect x="258" y="2364.4" width="1366" height="2.2" fill="#1a1a1a"/><path d="M290,2336.6 L276,2344.6 L290,2352.6Z M356,2336.6 L370,2344.6 L356,2352.6Z" fill="#b8b8b8"/><path d="M322,2334.6 L332,2344.6 L322,2354.6 L312,2344.6Z" fill="#454545" stroke="#b8b8b8" stroke-width="2.5"/><rect x="607" y="2325.1" width="39" height="39" fill="#1c1c1c" stroke="#2a2a2a" stroke-width="1"/><circle cx="625.5" cy="2346.64" r="12" fill="none" stroke="#3a8fe6" stroke-width="2.6"/><path d="M620.5,2330.64 H630.5 M625.5,2330.64 V2334.64" stroke="#3a8fe6" stroke-width="2.6"/><path d="M612.5,2336.64 L617.5,2332.64 L612.5,2340.64Z" fill="#3a8fe6"/><path d="M625.5,2346.64 L631.5,2339.64" stroke="#3a8fe6" stroke-width="2.6"/><path d="M659,2333.6 V2356.6 H686 M662,2350.6 L668,2338.6 L674,2347.6 L682,2336.6" stroke="#b8b8b8" stroke-width="2.5" fill="none"/><rect x="699" y="2324.6" width="233" height="40" fill="#4a4a4a"/><path d="M1343.5,2329.4 L1345.5,2330.0 L1347.3,2331.0 L1349.0,2332.1 L1350.5,2333.5 L1351.7,2335.1 L1352.7,2336.8 L1353.4,2338.6 L1353.9,2340.5 L1354.0,2342.4 L1353.9,2344.3 L1353.5,2346.1 L1352.9,2347.8 L1352.0,2349.4 L1351.0,2350.9 L1349.7,2352.1 L1348.3,2353.2 L1346.8,2354.0 L1345.2,2354.5 L1343.5,2354.9 L1341.8,2355.0 L1340.2,2354.8 L1338.7,2354.4 L1337.2,2353.8 L1335.8,2353.0 L1334.6,2352.1 L1333.6,2350.9 L1332.7,2349.7 L1332.1,2348.4 L1331.6,2347.0 L1331.4,2345.6 L1331.4,2344.2 L1331.6,2342.8 L1331.9,2341.5 L1332.5,2340.3 L1333.2,2339.1 L1334.1,2338.2 L1335.0,2337.3 L1336.1,2336.7 L1337.2,2336.2 L1338.4,2335.9 L1339.6,2335.7 L1340.7,2335.7 L1341.8,2335.9 L1342.9,2336.3 L1343.9,2336.8 L1344.8,2337.4 L1345.5,2338.1 L1346.1,2339.0 L1346.6,2339.8 L1347.0,2340.8 L1347.2,2341.7 L1347.2,2342.6 L1347.2,2343.5 L1347.0,2344.4 L1346.6,2345.2 L1346.2,2346.0 L1345.7,2346.6 L1345.1,2347.1 L1344.4,2347.6 L1343.8,2347.9 L1343.0,2348.1 L1342.3,2348.2 L1341.6,2348.2 L1341.0,2348.1 L1340.4,2347.9 L1339.8,2347.6 L1339.3,2347.2 L1338.9,2346.8 L1338.6,2346.4 L1338.3,2345.9" fill="none" stroke="#b8b8b8" stroke-width="2.6" stroke-linecap="round"/><rect x="258" y="2366.4" width="1366" height="43.6" fill="#232323"/><rect x="258" y="2408.0" width="1366" height="2.2" fill="#1a1a1a"/><path d="M579,2380.2 L587,2388.2 L579,2396.2" stroke="#b8b8b8" stroke-width="2.5" fill="none"/><path d="M948,2387.2 H970 M959,2376.2 V2398.2 M979,2387.2 H1008" stroke="#c8c8c8" stroke-width="4"/><rect x="258" y="2410.0" width="1366" height="43.6" fill="#232323"/><rect x="258" y="2451.6" width="1366" height="2.2" fill="#1a1a1a"/><rect x="267.5" y="2415.3" width="33" height="33" fill="#161616"/><path d="M535,2423.8 L543,2431.8 L535,2439.8" stroke="#b8b8b8" stroke-width="2.5" fill="none"/><rect x="258" y="2453.6" width="1366" height="43.6" fill="#2a2a2a"/><rect x="258" y="2495.2" width="1366" height="2.2" fill="#1a1a1a"/><rect x="268" y="2458.9" width="33" height="33" fill="#1a1a1a"/><path d="M272,2475.38 Q285,2463.38 298,2475.38 Q285,2487.38 272,2475.38Z" fill="#b8b8b8"/><circle cx="285" cy="2475.38" r="5" fill="#1a1a1a"/><circle cx="285" cy="2475.38" r="2.5" fill="#b8b8b8"/><rect x="345" y="2458.9" width="33" height="33" fill="#1c1c1c"/><rect x="383" y="2458.9" width="33" height="33" fill="#1c1c1c"/><path d="M447,2471.4 L456,2480.4 L465,2471.4" stroke="#b8b8b8" stroke-width="2.5" fill="none"/><rect x="475" y="2460.4" width="31" height="30" fill="#6b73c0"/><path d="M620,2461.4 L624,2471.4 L635,2471.4 L626,2478.4 L629,2489.4 L620,2482.4 L611,2489.4 L614,2478.4 L605,2471.4 L616,2471.4Z" fill="#b8b8b8"/><rect x="942" y="2458.9" width="33" height="33" fill="#1c1c1c"/><rect x="980.5" y="2458.9" width="33" height="33" fill="#1c1c1c"/><rect x="1019" y="2458.9" width="33" height="33" fill="#1c1c1c"/><rect x="1057.5" y="2458.9" width="33" height="33" fill="#1c1c1c"/><rect x="1134.6" y="2458.9" width="33" height="33" fill="#1c1c1c"/><rect x="1173" y="2458.9" width="33" height="33" fill="#1c1c1c"/><rect x="1211" y="2458.9" width="33" height="33" fill="#1c1c1c"/><path d="M948.5,2475.38 Q948.5,2460.38 958.5,2460.38 Q968.5,2460.38 968.5,2475.38 Q970.5,2475.38 970.5,2478.38 L946.5,2478.38 Q946.5,2475.38 948.5,2475.38Z" fill="#b8b8b8"/><circle cx="954.5" cy="2468.38" r="3" fill="#232323"/><circle cx="962.5" cy="2468.38" r="3" fill="#232323"/><rect x="955.5" y="2472.38" width="6" height="14" rx="3" fill="#b8b8b8"/><path d="M943.5,2483.38 h10 M963.5,2483.38 h10" stroke="#b8b8b8" stroke-width="2.5"/><circle cx="997" cy="2475.38" r="6" fill="none" stroke="#8a8a8a" stroke-width="2.5"/><path d="M1006.0,2475.4 L1010.0,2475.4" stroke="#8a8a8a" stroke-width="2.5"/><path d="M1003.4,2481.7 L1006.2,2484.6" stroke="#8a8a8a" stroke-width="2.5"/><path d="M997.0,2484.4 L997.0,2488.4" stroke="#8a8a8a" stroke-width="2.5"/><path d="M990.6,2481.7 L987.8,2484.6" stroke="#8a8a8a" stroke-width="2.5"/><path d="M988.0,2475.4 L984.0,2475.4" stroke="#8a8a8a" stroke-width="2.5"/><path d="M990.6,2469.0 L987.8,2466.2" stroke="#8a8a8a" stroke-width="2.5"/><path d="M997.0,2466.4 L997.0,2462.4" stroke="#8a8a8a" stroke-width="2.5"/><path d="M1003.4,2469.0 L1006.2,2466.2" stroke="#8a8a8a" stroke-width="2.5"/><path d="M1023,2488.4 L1047,2462.4" stroke="#b8b8b8" stroke-width="3"/><circle cx="1145" cy="2482.38" r="9" fill="none" stroke="#b8b8b8" stroke-width="2.5"/><circle cx="1149" cy="2478.38" r="9" fill="#2a2a2a" stroke="#b8b8b8" stroke-width="2.5"/><circle cx="1155" cy="2471.38" r="11" fill="#7a7a7a" stroke="#b8b8b8" stroke-width="2.5"/><path d="M1310.5,2460.1 L1312.5,2460.8 L1314.3,2461.7 L1316.0,2462.9 L1317.5,2464.3 L1318.7,2465.8 L1319.7,2467.5 L1320.4,2469.4 L1320.9,2471.2 L1321.0,2473.1 L1320.9,2475.0 L1320.5,2476.8 L1319.9,2478.6 L1319.0,2480.2 L1318.0,2481.6 L1316.7,2482.9 L1315.3,2483.9 L1313.8,2484.7 L1312.2,2485.3 L1310.5,2485.6 L1308.8,2485.7 L1307.2,2485.6 L1305.7,2485.2 L1304.2,2484.6 L1302.8,2483.8 L1301.6,2482.8 L1300.6,2481.7 L1299.7,2480.5 L1299.1,2479.1 L1298.6,2477.7 L1298.4,2476.3 L1298.4,2474.9 L1298.6,2473.5 L1298.9,2472.2 L1299.5,2471.0 L1300.2,2469.9 L1301.1,2468.9 L1302.0,2468.1 L1303.1,2467.4 L1304.2,2466.9 L1305.4,2466.6 L1306.6,2466.5 L1307.7,2466.5 L1308.8,2466.7 L1309.9,2467.0 L1310.9,2467.5 L1311.8,2468.2 L1312.5,2468.9 L1313.1,2469.7 L1313.6,2470.6 L1314.0,2471.5 L1314.2,2472.4 L1314.2,2473.4 L1314.2,2474.3 L1314.0,2475.2 L1313.6,2476.0 L1313.2,2476.7 L1312.7,2477.3 L1312.1,2477.9 L1311.4,2478.3 L1310.8,2478.6 L1310.0,2478.8 L1309.3,2478.9 L1308.6,2478.9 L1308.0,2478.8 L1307.4,2478.6 L1306.8,2478.3 L1306.3,2478.0 L1305.9,2477.6 L1305.6,2477.1 L1305.3,2476.6" fill="none" stroke="#b8b8b8" stroke-width="2.6" stroke-linecap="round"/><rect x="1342" y="2458.9" width="228" height="33" fill="#181818"/><path d="M1540,2471.4 L1548,2479.4 L1556,2471.4" stroke="#c8c8c8" stroke-width="2.5" fill="none"/><rect x="258" y="2497.2" width="1366" height="43.6" fill="#232323"/><rect x="258" y="2538.8" width="1366" height="2.2" fill="#1a1a1a"/><path d="M491,2515.0 L499,2523.0 L507,2515.0" stroke="#b8b8b8" stroke-width="2.5" fill="none"/><rect x="258" y="2540.7" width="1366" height="43.6" fill="#232323"/><rect x="258" y="2582.3" width="1366" height="2.2" fill="#1a1a1a"/><rect x="267.5" y="2546.0" width="33" height="33" fill="#161616"/><path d="M535,2558.5 L543,2566.5 L551,2558.5" stroke="#b8b8b8" stroke-width="2.5" fill="none"/><rect x="258" y="2584.3" width="1366" height="43.6" fill="#232323"/><rect x="258" y="2625.9" width="1366" height="2.2" fill="#1a1a1a"/><path d="M290,2598.1 L276,2606.1 L290,2614.1Z M356,2598.1 L370,2606.1 L356,2614.1Z" fill="#b8b8b8"/><path d="M322,2596.1 L332,2606.1 L322,2616.1 L312,2606.1Z" fill="#454545" stroke="#b8b8b8" stroke-width="2.5"/><rect x="607" y="2586.6" width="39" height="39" fill="#1c1c1c" stroke="#2a2a2a" stroke-width="1"/><circle cx="625.5" cy="2608.12" r="12" fill="none" stroke="#3a8fe6" stroke-width="2.6"/><path d="M620.5,2592.12 H630.5 M625.5,2592.12 V2596.12" stroke="#3a8fe6" stroke-width="2.6"/><path d="M612.5,2598.12 L617.5,2594.12 L612.5,2602.12Z" fill="#3a8fe6"/><path d="M625.5,2608.12 L631.5,2601.12" stroke="#3a8fe6" stroke-width="2.6"/><path d="M659,2595.1 V2618.1 H686 M662,2612.1 L668,2600.1 L674,2609.1 L682,2598.1" stroke="#b8b8b8" stroke-width="2.5" fill="none"/><path d="M1343.5,2590.8 L1345.5,2591.5 L1347.3,2592.4 L1349.0,2593.6 L1350.5,2595.0 L1351.7,2596.6 L1352.7,2598.3 L1353.4,2600.1 L1353.9,2602.0 L1354.0,2603.9 L1353.9,2605.8 L1353.5,2607.6 L1352.9,2609.3 L1352.0,2610.9 L1351.0,2612.3 L1349.7,2613.6 L1348.3,2614.6 L1346.8,2615.5 L1345.2,2616.0 L1343.5,2616.4 L1341.8,2616.4 L1340.2,2616.3 L1338.7,2615.9 L1337.2,2615.3 L1335.8,2614.5 L1334.6,2613.5 L1333.6,2612.4 L1332.7,2611.2 L1332.1,2609.9 L1331.6,2608.5 L1331.4,2607.1 L1331.4,2605.6 L1331.6,2604.3 L1331.9,2603.0 L1332.5,2601.7 L1333.2,2600.6 L1334.1,2599.6 L1335.0,2598.8 L1336.1,2598.1 L1337.2,2597.7 L1338.4,2597.3 L1339.6,2597.2 L1340.7,2597.2 L1341.8,2597.4 L1342.9,2597.8 L1343.9,2598.3 L1344.8,2598.9 L1345.5,2599.6 L1346.1,2600.4 L1346.6,2601.3 L1347.0,2602.2 L1347.2,2603.2 L1347.2,2604.1 L1347.2,2605.0 L1347.0,2605.9 L1346.6,2606.7 L1346.2,2607.4 L1345.7,2608.1 L1345.1,2608.6 L1344.4,2609.1 L1343.8,2609.4 L1343.0,2609.6 L1342.3,2609.7 L1341.6,2609.7 L1341.0,2609.6 L1340.4,2609.4 L1339.8,2609.1 L1339.3,2608.7 L1338.9,2608.3 L1338.6,2607.8 L1338.3,2607.4" fill="none" stroke="#b8b8b8" stroke-width="2.6" stroke-linecap="round"/><rect x="1622" y="1854" width="2" height="767" fill="#000"/><rect x="1624" y="1854" width="2870" height="22" fill="#232323"/><rect x="1640" y="1855" width="2838" height="21" fill="#686868"/><path d="M1640,1855 h-6 a9,10.5 0 0 0 0,21 h6Z" fill="#3a8fe6"/><path d="M4478,1855 h6 a9,10.5 0 0 1 0,21 h-6Z" fill="#3a8fe6"/><rect x="1642.2" y="1912" width="2.5" height="14" fill="#9a9a9a"/><rect x="1878.2" y="1912" width="2.5" height="14" fill="#9a9a9a"/><rect x="2114.2" y="1912" width="2.5" height="14" fill="#9a9a9a"/><rect x="2350.2" y="1912" width="2.5" height="14" fill="#9a9a9a"/><rect x="2586.2" y="1912" width="2.5" height="14" fill="#9a9a9a"/><rect x="2822.2" y="1912" width="2.5" height="14" fill="#9a9a9a"/><rect x="3058.2" y="1912" width="2.5" height="14" fill="#9a9a9a"/><rect x="3294.2" y="1912" width="2.5" height="14" fill="#9a9a9a"/><rect x="3530.2" y="1912" width="2.5" height="14" fill="#9a9a9a"/><rect x="3766.2" y="1912" width="2.5" height="14" fill="#9a9a9a"/><rect x="4002.2" y="1912" width="2.5" height="14" fill="#9a9a9a"/><rect x="4238.2" y="1912" width="2.5" height="14" fill="#9a9a9a"/><rect x="4474.2" y="1912" width="2.5" height="14" fill="#9a9a9a"/><rect x="1624" y="1927" width="2870" height="3" fill="#0e0e0e"/><rect x="1624" y="1930" width="2852" height="38" fill="#666666"/><path d="M1640,1931 h-6 a9,9 0 0 0 -9,9 v18 a9,9 0 0 0 9,9 h6Z" fill="#3a8fe6"/><path d="M4476,1931 h6 a9,9 0 0 1 9,9 v18 a9,9 0 0 1 -9,9 h-6Z" fill="#3a8fe6"/><rect x="1642" y="1968.5" width="2834" height="9.5" fill="#2eb84c"/><rect x="1624" y="1974.2" width="2852" height="43.6" fill="#333333"/><rect x="1624" y="1974.2" width="18" height="43.6" fill="#262626"/><rect x="1624" y="2015.8" width="2852" height="2.2" fill="#1c1c1c"/><rect x="4475.7" y="1974.2" width="18" height="43.6" fill="#2b2b2b"/><rect x="1624" y="2017.8" width="2852" height="43.6" fill="#333333"/><rect x="1624" y="2017.8" width="18" height="43.6" fill="#262626"/><rect x="1624" y="2059.4" width="2852" height="2.2" fill="#1c1c1c"/><rect x="4475.7" y="2017.8" width="18" height="43.6" fill="#2b2b2b"/><rect x="1624" y="2061.4" width="2852" height="43.6" fill="#333333"/><rect x="1624" y="2061.4" width="18" height="43.6" fill="#262626"/><rect x="1624" y="2103.0" width="2852" height="2.2" fill="#1c1c1c"/><rect x="4475.7" y="2061.4" width="18" height="43.6" fill="#2b2b2b"/><rect x="1624" y="2104.9" width="2852" height="43.6" fill="#333333"/><rect x="1624" y="2104.9" width="18" height="43.6" fill="#262626"/><rect x="1624" y="2146.5" width="2852" height="2.2" fill="#1c1c1c"/><rect x="4475.7" y="2104.9" width="18" height="43.6" fill="#2b2b2b"/><rect x="1624" y="2148.5" width="2852" height="43.6" fill="#333333"/><rect x="1624" y="2148.5" width="18" height="43.6" fill="#262626"/><rect x="1624" y="2190.1" width="2852" height="2.2" fill="#1c1c1c"/><rect x="4475.7" y="2148.5" width="18" height="43.6" fill="#2b2b2b"/><rect x="1624" y="2192.1" width="2852" height="43.6" fill="#333333"/><rect x="1624" y="2192.1" width="18" height="43.6" fill="#262626"/><rect x="1624" y="2233.7" width="2852" height="2.2" fill="#1c1c1c"/><rect x="4475.7" y="2192.1" width="18" height="43.6" fill="#2b2b2b"/><rect x="1624" y="2235.7" width="2852" height="43.6" fill="#333333"/><rect x="1624" y="2235.7" width="18" height="43.6" fill="#262626"/><rect x="1624" y="2277.3" width="2852" height="2.2" fill="#1c1c1c"/><rect x="4475.7" y="2235.7" width="18" height="43.6" fill="#2b2b2b"/><rect x="1624" y="2279.3" width="2852" height="43.6" fill="#333333"/><rect x="1624" y="2279.3" width="18" height="43.6" fill="#262626"/><rect x="1624" y="2320.9" width="2852" height="2.2" fill="#1c1c1c"/><rect x="4475.7" y="2279.3" width="18" height="43.6" fill="#2b2b2b"/><rect x="1624" y="2322.8" width="2852" height="43.6" fill="#333333"/><rect x="1624" y="2322.8" width="18" height="43.6" fill="#262626"/><rect x="1624" y="2364.4" width="2852" height="2.2" fill="#1c1c1c"/><rect x="4475.7" y="2322.8" width="18" height="43.6" fill="#2b2b2b"/><rect x="1624" y="2366.4" width="2852" height="43.6" fill="#333333"/><rect x="1624" y="2366.4" width="18" height="43.6" fill="#262626"/><rect x="1624" y="2408.0" width="2852" height="2.2" fill="#1c1c1c"/><rect x="4475.7" y="2366.4" width="18" height="43.6" fill="#2b2b2b"/><rect x="1624" y="2410.0" width="2852" height="43.6" fill="#333333"/><rect x="1624" y="2410.0" width="18" height="43.6" fill="#262626"/><rect x="1624" y="2451.6" width="2852" height="2.2" fill="#1c1c1c"/><rect x="4475.7" y="2410.0" width="18" height="43.6" fill="#2b2b2b"/><rect x="1624" y="2453.6" width="2852" height="43.6" fill="#333333"/><rect x="1624" y="2453.6" width="18" height="43.6" fill="#262626"/><rect x="1624" y="2495.2" width="2852" height="2.2" fill="#1c1c1c"/><rect x="4475.7" y="2453.6" width="18" height="43.6" fill="#2b2b2b"/><rect x="1624" y="2497.2" width="2852" height="43.6" fill="#333333"/><rect x="1624" y="2497.2" width="18" height="43.6" fill="#262626"/><rect x="1624" y="2538.8" width="2852" height="2.2" fill="#1c1c1c"/><rect x="4475.7" y="2497.2" width="18" height="43.6" fill="#2b2b2b"/><rect x="1624" y="2540.7" width="2852" height="43.6" fill="#333333"/><rect x="1624" y="2540.7" width="18" height="43.6" fill="#262626"/><rect x="1624" y="2582.3" width="2852" height="2.2" fill="#1c1c1c"/><rect x="4475.7" y="2540.7" width="18" height="43.6" fill="#2b2b2b"/><rect x="1624" y="2584.3" width="2852" height="43.6" fill="#333333"/><rect x="1624" y="2584.3" width="18" height="43.6" fill="#262626"/><rect x="1624" y="2625.9" width="2852" height="2.2" fill="#1c1c1c"/><rect x="4475.7" y="2584.3" width="18" height="43.6" fill="#2b2b2b"/><rect x="1642" y="1978.0" width="2834" height="35" fill="#525a8c"/><rect x="1642" y="2021.6" width="2834" height="35" fill="#525a8c"/><rect x="1642" y="2457.4" width="2834" height="35" fill="#525a8c"/><rect x="1642" y="2063.2" width="2834" height="39" fill="#5966b8"/><rect x="1642" y="2063.2" width="2834" height="3" fill="#8e98d8"/><rect x="1642" y="2063.2" width="3" height="39" fill="#c0c6e8"/><rect x="4475.7" y="1979" width="18" height="125" fill="#333"/><path d="M1631.9,2202.4 H1654.9 V2205.9 Q1654.9,2209.9 1648.4,2211.4 Q1645.4,2213.9 1648.4,2216.4 Q1654.9,2217.9 1654.9,2221.9 V2225.4 H1631.9 V2221.9 Q1631.9,2217.9 1638.4,2216.4 Q1641.4,2213.9 1638.4,2211.4 Q1631.9,2209.9 1631.9,2205.9Z" fill="#b8b8b8"/><path d="M2788.3,2202.4 H2811.3 V2205.9 Q2811.3,2209.9 2804.8,2211.4 Q2801.8,2213.9 2804.8,2216.4 Q2811.3,2217.9 2811.3,2221.9 V2225.4 H2788.3 V2221.9 Q2788.3,2217.9 2794.8,2216.4 Q2797.8,2213.9 2794.8,2211.4 Q2788.3,2209.9 2788.3,2205.9Z" fill="#b8b8b8"/><path d="M3991.9,2202.4 H4014.9 V2205.9 Q4014.9,2209.9 4008.4,2211.4 Q4005.4,2213.9 4008.4,2216.4 Q4014.9,2217.9 4014.9,2221.9 V2225.4 H3991.9 V2221.9 Q3991.9,2217.9 3998.4,2216.4 Q4001.4,2213.9 3998.4,2211.4 Q3991.9,2209.9 3991.9,2205.9Z" fill="#b8b8b8"/><path d="M1631.9,2333.14 H1654.9 V2336.64 Q1654.9,2340.64 1648.4,2342.14 Q1645.4,2344.64 1648.4,2347.14 Q1654.9,2348.64 1654.9,2352.64 V2356.14 H1631.9 V2352.64 Q1631.9,2348.64 1638.4,2347.14 Q1641.4,2344.64 1638.4,2342.14 Q1631.9,2340.64 1631.9,2336.64Z" fill="#b8b8b8"/><path d="M2788.3,2333.14 H2811.3 V2336.64 Q2811.3,2340.64 2804.8,2342.14 Q2801.8,2344.64 2804.8,2347.14 Q2811.3,2348.64 2811.3,2352.64 V2356.14 H2788.3 V2352.64 Q2788.3,2348.64 2794.8,2347.14 Q2797.8,2344.64 2794.8,2342.14 Q2788.3,2340.64 2788.3,2336.64Z" fill="#b8b8b8"/><path d="M4440.3,2333.14 H4463.3 V2336.64 Q4463.3,2340.64 4456.8,2342.14 Q4453.8,2344.64 4456.8,2347.14 Q4463.3,2348.64 4463.3,2352.64 V2356.14 H4440.3 V2352.64 Q4440.3,2348.64 4446.8,2347.14 Q4449.8,2344.64 4446.8,2342.14 Q4440.3,2340.64 4440.3,2336.64Z" fill="#b8b8b8"/><path d="M3047.9,2333.14 H3070.9 V2336.64 Q3070.9,2340.64 3064.4,2342.14 Q3061.4,2344.64 3064.4,2347.14 Q3070.9,2348.64 3070.9,2352.64 V2356.14 H3047.9 V2352.64 Q3047.9,2348.64 3054.4,2347.14 Q3057.4,2344.64 3054.4,2342.14 Q3047.9,2340.64 3047.9,2336.64Z" fill="none" stroke="#2f80d8" stroke-width="10" stroke-linejoin="round"/><path d="M3047.9,2333.14 H3070.9 V2336.64 Q3070.9,2340.64 3064.4,2342.14 Q3061.4,2344.64 3064.4,2347.14 Q3070.9,2348.64 3070.9,2352.64 V2356.14 H3047.9 V2352.64 Q3047.9,2348.64 3054.4,2347.14 Q3057.4,2344.64 3054.4,2342.14 Q3047.9,2340.64 3047.9,2336.64Z" fill="#b8b8b8" stroke="#173a63" stroke-width="4" stroke-linejoin="round"/><path d="M3047.9,2333.14 H3070.9 V2336.64 Q3070.9,2340.64 3064.4,2342.14 Q3061.4,2344.64 3064.4,2347.14 Q3070.9,2348.64 3070.9,2352.64 V2356.14 H3047.9 V2352.64 Q3047.9,2348.64 3054.4,2347.14 Q3057.4,2344.64 3054.4,2342.14 Q3047.9,2340.64 3047.9,2336.64Z" fill="#b8b8b8"/><path d="M1631.9,2594.62 H1654.9 V2598.12 Q1654.9,2602.12 1648.4,2603.62 Q1645.4,2606.12 1648.4,2608.62 Q1654.9,2610.12 1654.9,2614.12 V2617.62 H1631.9 V2614.12 Q1631.9,2610.12 1638.4,2608.62 Q1641.4,2606.12 1638.4,2603.62 Q1631.9,2602.12 1631.9,2598.12Z" fill="#b8b8b8"/><path d="M2788.3,2594.62 H2811.3 V2598.12 Q2811.3,2602.12 2804.8,2603.62 Q2801.8,2606.12 2804.8,2608.62 Q2811.3,2610.12 2811.3,2614.12 V2617.62 H2788.3 V2614.12 Q2788.3,2610.12 2794.8,2608.62 Q2797.8,2606.12 2794.8,2603.62 Q2788.3,2602.12 2788.3,2598.12Z" fill="#b8b8b8"/><path d="M3354.7000000000003,2594.62 H3377.7000000000003 V2598.12 Q3377.7000000000003,2602.12 3371.2000000000003,2603.62 Q3368.2000000000003,2606.12 3371.2000000000003,2608.62 Q3377.7000000000003,2610.12 3377.7000000000003,2614.12 V2617.62 H3354.7000000000003 V2614.12 Q3354.7000000000003,2610.12 3361.2000000000003,2608.62 Q3364.2000000000003,2606.12 3361.2000000000003,2603.62 Q3354.7000000000003,2602.12 3354.7000000000003,2598.12Z" fill="#b8b8b8"/><path d="M3991.9,2594.62 H4014.9 V2598.12 Q4014.9,2602.12 4008.4,2603.62 Q4005.4,2606.12 4008.4,2608.62 Q4014.9,2610.12 4014.9,2614.12 V2617.62 H3991.9 V2614.12 Q3991.9,2610.12 3998.4,2608.62 Q4001.4,2606.12 3998.4,2603.62 Q3991.9,2602.12 3991.9,2598.12Z" fill="#b8b8b8"/><rect x="2485" y="2104.9" width="12" height="41.6" fill="#454545"/><path d="M2486,2116.7 H2503 M2486,2137.7 H2503 M2492,2116.7 V2137.7 M2497,2116.7 V2137.7" stroke="#c8c8c8" stroke-width="3"/><rect x="2485" y="2148.5" width="12" height="41.6" fill="#454545"/><path d="M2486,2160.3 H2503 M2486,2181.3 H2503 M2492,2160.3 V2181.3 M2497,2160.3 V2181.3" stroke="#c8c8c8" stroke-width="3"/><rect x="2485" y="2235.7" width="12" height="41.6" fill="#454545"/><path d="M2486,2247.5 H2503 M2486,2268.5 H2503 M2492,2247.5 V2268.5 M2497,2247.5 V2268.5" stroke="#c8c8c8" stroke-width="3"/><rect x="2485" y="2279.3" width="12" height="41.6" fill="#454545"/><path d="M2486,2291.1 H2503 M2486,2312.1 H2503 M2492,2291.1 V2312.1 M2497,2291.1 V2312.1" stroke="#c8c8c8" stroke-width="3"/><rect x="2485" y="2366.4" width="12" height="41.6" fill="#454545"/><path d="M2486,2378.2 H2503 M2486,2399.2 H2503 M2492,2378.2 V2399.2 M2497,2378.2 V2399.2" stroke="#c8c8c8" stroke-width="3"/><rect x="2485" y="2410.0" width="12" height="41.6" fill="#454545"/><path d="M2486,2421.8 H2503 M2486,2442.8 H2503 M2492,2421.8 V2442.8 M2497,2421.8 V2442.8" stroke="#c8c8c8" stroke-width="3"/><rect x="2485" y="2497.2" width="12" height="41.6" fill="#454545"/><path d="M2486,2509.0 H2503 M2486,2530.0 H2503 M2492,2509.0 V2530.0 M2497,2509.0 V2530.0" stroke="#c8c8c8" stroke-width="3"/><rect x="2485" y="2540.7" width="12" height="41.6" fill="#454545"/><path d="M2486,2552.5 H2503 M2486,2573.5 H2503 M2492,2552.5 V2573.5 M2497,2552.5 V2573.5" stroke="#c8c8c8" stroke-width="3"/><rect x="2493.0" y="1855" width="3" height="766" fill="#3a8fe6"/><path d="M2480,1891 h29 v17 l-14.5,17 l-14.5,-17Z" fill="#3a8fe6"/><path d="M2490,1906 h9 M2494.5,1906 v8" stroke="#1a3a6a" stroke-width="2"/><rect x="4493" y="1770" width="44" height="851" fill="#1c1c1c"/><rect x="4495" y="2621" width="42" height="45" fill="#262626"/><rect x="4493" y="2621" width="3" height="45" fill="#171717"/><rect x="4475.7" y="1876" width="18" height="51" fill="#232323"/><path d="M4478,1855 h6 a9,10.5 0 0 1 0,21 h-6Z" fill="#3a8fe6"/><path d="M4476,1931 h6 a9,9 0 0 1 9,9 v18 a9,9 0 0 1 -9,9 h-6Z" fill="#3a8fe6"/><path d="M4504,1932 h28 v26 l-14,11 l-14,-11Z" fill="#b4b4b4"/><path d="M4512,2006 L4522,1990 L4522,2006Z M4505,2010 L4522,1990" stroke="#b4b4b4" stroke-width="2.5" fill="none"/><rect x="4518" y="1997" width="14" height="14" fill="#b4b4b4"/><circle cx="4514" cy="2014" r="7" fill="#1e1e1e" stroke="#b4b4b4" stroke-width="2.5"/><rect x="4495.5" y="2323" width="37" height="77" rx="18" fill="#2e2e2e"/><rect x="258" y="2621" width="4236" height="45" fill="#242424"/><rect x="258" y="2619.5" width="1640" height="3" fill="#0a0a0a"/><rect x="270" y="2626" width="40" height="38" fill="#2a2a2a"/><rect x="276" y="2632" width="17" height="17" fill="none" stroke="#3a8fe6" stroke-width="2.5"/><rect x="281" y="2637" width="17" height="17" fill="#2a2a2a" stroke="#3a8fe6" stroke-width="2.5"/><rect x="287" y="2643" width="17" height="17" fill="#2a2a2a" stroke="#3a8fe6" stroke-width="2.5"/><circle cx="295.5" cy="2651.5" r="3" fill="#3a8fe6"/><circle cx="334" cy="2639" r="9" fill="none" stroke="#b8b8b8" stroke-width="2.5"/><rect x="334" y="2639" width="18" height="18" fill="#1f1f1f" stroke="#b8b8b8" stroke-width="2.5"/><path d="M378,2630 h18 v7 l5,9 l-5,9 v7 h-18 v-7 l-5,-9 l5,-9Z" fill="#b8b8b8"/><rect x="383" y="2631" width="8" height="30" fill="#6a6a6a"/><circle cx="432" cy="2646" r="11" fill="#b8b8b8"/><rect x="420" y="2652" width="30" height="4" fill="#b8b8b8"/><path d="M440,2652 L445,2636 M444,2652 L452,2639" stroke="#b8b8b8" stroke-width="2"/><circle cx="445" cy="2636" r="2.5" fill="#b8b8b8"/><circle cx="452" cy="2639" r="2.5" fill="#b8b8b8"/><rect x="936" y="2626" width="342" height="37" rx="4" fill="#1a1a1a" stroke="#2a2a2a" stroke-width="1.5"/><path d="M1637,2649 L1650,2641 L1662,2649Z" fill="#b8b8b8"/><rect x="1716" y="2646" width="98" height="5" rx="2" fill="#3a3a3a"/><circle cx="1704" cy="2648" r="10" fill="none" stroke="#9a9a9a" stroke-width="4"/><path d="M1844,2652 L1858,2638 L1864,2645 L1872,2634 L1887,2652Z" fill="#b8b8b8"/></svg>
<div class="a t" style="left:376.0px;top:1783.5px;line-height:40px;font-size:28px;color:#a6a6a6;">ae illustrations</div>
<div class="a t" style="left:752.0px;top:1783.5px;line-height:40px;font-size:28px;color:#a6a6a6;">jing</div>
<div class="a t" style="left:991.0px;top:1783.5px;line-height:40px;font-size:28px;color:#d8d8d8;">chou</div>
<div class="a t" style="left:288.0px;top:1850.5px;line-height:40px;font-size:37px;color:#3a8fe6;font-weight:bold">0:00:01:06</div>
<div class="a t" style="left:283.0px;top:1886.5px;line-height:40px;font-size:25px;color:#3a8fe6;">00036 (30.00 fps)</div>
<div class="a t" style="left:527.0px;top:1936.5px;line-height:40px;font-size:26px;color:#a0a0a0;">#</div>
<div class="a t" style="left:611.5px;top:1936.5px;line-height:40px;font-size:26px;color:#a0a0a0;">Layer Name</div>
<div class="a t" style="left:1296.0px;top:1936.5px;line-height:40px;font-size:26px;color:#a0a0a0;">Parent &amp; Link</div>
<div class="a t" style="left:1058.0px;top:1936.5px;line-height:40px;font-size:34px;color:#b0b0b0;"><i style="font-family:Liberation Sans">fx</i></div>
<div class="a t" style="left:529.5px;top:1976.5px;line-height:40px;font-size:28px;color:#a8a8a8;font-weight:bold">41</div>
<div class="a t" style="left:654.0px;top:1976.5px;line-height:40px;font-size:28px;color:#aaaaaa;font-weight:bold">Layer 22 Outlines</div>
<div class="a t" style="left:1357.0px;top:1976.5px;line-height:40px;font-size:28px;color:#d8d8d8;">2. head</div>
<div class="a t" style="left:529.5px;top:2020.1px;line-height:40px;font-size:28px;color:#a8a8a8;font-weight:bold">42</div>
<div class="a t" style="left:654.0px;top:2020.1px;line-height:40px;font-size:28px;color:#aaaaaa;font-weight:bold">Layer 23 Outlines</div>
<div class="a t" style="left:1357.0px;top:2020.1px;line-height:40px;font-size:28px;color:#d8d8d8;">2. head</div>
<div class="a t" style="left:529.5px;top:2063.7px;line-height:40px;font-size:28px;color:#a8a8a8;font-weight:bold">43</div>
<div class="a t" style="left:654.0px;top:2063.7px;line-height:40px;font-size:28px;color:#aaaaaa;font-weight:bold">Layer 24 Outlines</div>
<div class="a t" style="left:1060.0px;top:2063.7px;line-height:40px;font-size:34px;color:#b0b0b0;"><i style="font-family:Liberation Sans">fx</i></div>
<div class="a t" style="left:1357.0px;top:2063.7px;line-height:40px;font-size:28px;color:#d8d8d8;">2. head</div>
<div class="a t" style="left:531.0px;top:2107.2px;line-height:40px;font-size:28px;color:#a6a6a6;">Effects</div>
<div class="a t" style="left:270.0px;top:2150.8px;line-height:40px;font-size:34px;color:#a8a8a8;"><i style="font-family:Liberation Sans">fx</i></div>
<div class="a t" style="left:573.0px;top:2150.8px;line-height:40px;font-size:28px;color:#a6a6a6;">Wiggle - position</div>
<div class="a t" style="left:943.0px;top:2150.8px;line-height:40px;font-size:28px;color:#3a8fe6;">Reset</div>
<div class="a t" style="left:707.0px;top:2194.4px;line-height:40px;font-size:28px;color:#a6a6a6;">Wiggle ... (pixels)</div>
<div class="a t" style="left:944.0px;top:2194.4px;line-height:40px;font-size:28px;color:#3a8fe6;">41.3</div>
<div class="a t" style="left:270.0px;top:2238.0px;line-height:40px;font-size:34px;color:#a8a8a8;"><i style="font-family:Liberation Sans">fx</i></div>
<div class="a t" style="left:573.0px;top:2238.0px;line-height:40px;font-size:28px;color:#a6a6a6;">Wiggle - gelatin</div>
<div class="a t" style="left:943.0px;top:2238.0px;line-height:40px;font-size:28px;color:#3a8fe6;">Reset</div>
<div class="a t" style="left:658.0px;top:2281.6px;line-height:40px;font-size:28px;color:#a6a6a6;">Wiggle ...d (wigs/sec)</div>
<div class="a t" style="left:944.0px;top:2281.6px;line-height:40px;font-size:28px;color:#3a8fe6;">1.5</div>
<div class="a t" style="left:707.0px;top:2325.1px;line-height:40px;font-size:28px;color:#a6a6a6;">Wiggle Amount</div>
<div class="a t" style="left:944.0px;top:2325.1px;line-height:40px;font-size:28px;color:#3a8fe6;">0.5</div>
<div class="a t" style="left:617.0px;top:2368.7px;line-height:40px;font-size:28px;color:#a6a6a6;">Compositing Options</div>
<div class="a t" style="left:270.0px;top:2412.3px;line-height:40px;font-size:34px;color:#a8a8a8;"><i style="font-family:Liberation Sans">fx</i></div>
<div class="a t" style="left:573.0px;top:2412.3px;line-height:40px;font-size:28px;color:#a6a6a6;">(Transform) 2</div>
<div class="a t" style="left:943.0px;top:2412.3px;line-height:40px;font-size:28px;color:#3a8fe6;">Reset</div>
<div class="a t" style="left:529.5px;top:2455.9px;line-height:40px;font-size:28px;color:#a8a8a8;font-weight:bold">44</div>
<div class="a t" style="left:654.0px;top:2455.9px;line-height:40px;font-size:28px;color:#aaaaaa;font-weight:bold">right red Outlines</div>
<div class="a t" style="left:1060.0px;top:2455.9px;line-height:40px;font-size:34px;color:#b0b0b0;"><i style="font-family:Liberation Sans">fx</i></div>
<div class="a t" style="left:1357.0px;top:2455.9px;line-height:40px;font-size:28px;color:#d8d8d8;">2. head</div>
<div class="a t" style="left:531.0px;top:2499.5px;line-height:40px;font-size:28px;color:#a6a6a6;">Effects</div>
<div class="a t" style="left:270.0px;top:2543.0px;line-height:40px;font-size:34px;color:#a8a8a8;"><i style="font-family:Liberation Sans">fx</i></div>
<div class="a t" style="left:573.0px;top:2543.0px;line-height:40px;font-size:28px;color:#a6a6a6;">CC Bend It</div>
<div class="a t" style="left:943.0px;top:2543.0px;line-height:40px;font-size:28px;color:#3a8fe6;">Reset</div>
<div class="a t" style="left:707.0px;top:2586.6px;line-height:40px;font-size:28px;color:#a6a6a6;">Bend</div>
<div class="a t" style="left:944.0px;top:2586.6px;line-height:40px;font-size:28px;color:#3a8fe6;">8.1</div>
<div class="a t" style="left:1610.2px;top:1876.5px;line-height:40px;font-size:25px;color:#a8a8a8;letter-spacing:-0.5px">0:00f</div>
<div class="a t" style="left:1859.5px;top:1876.5px;line-height:40px;font-size:25px;color:#a8a8a8;letter-spacing:-0.5px">10f</div>
<div class="a t" style="left:2095.5px;top:1876.5px;line-height:40px;font-size:25px;color:#a8a8a8;letter-spacing:-0.5px">20f</div>
<div class="a t" style="left:2311.5px;top:1876.5px;line-height:40px;font-size:25px;color:#a8a8a8;letter-spacing:-0.5px">01:00f</div>
<div class="a t" style="left:2567.5px;top:1876.5px;line-height:40px;font-size:25px;color:#a8a8a8;letter-spacing:-0.5px">10f</div>
<div class="a t" style="left:2803.5px;top:1876.5px;line-height:40px;font-size:25px;color:#a8a8a8;letter-spacing:-0.5px">20f</div>
<div class="a t" style="left:3019.5px;top:1876.5px;line-height:40px;font-size:25px;color:#a8a8a8;letter-spacing:-0.5px">02:00f</div>
<div class="a t" style="left:3275.5px;top:1876.5px;line-height:40px;font-size:25px;color:#a8a8a8;letter-spacing:-0.5px">10f</div>
<div class="a t" style="left:3511.5px;top:1876.5px;line-height:40px;font-size:25px;color:#a8a8a8;letter-spacing:-0.5px">20f</div>
<div class="a t" style="left:3727.5px;top:1876.5px;line-height:40px;font-size:25px;color:#a8a8a8;letter-spacing:-0.5px">03:00f</div>
<div class="a t" style="left:3983.5px;top:1876.5px;line-height:40px;font-size:25px;color:#a8a8a8;letter-spacing:-0.5px">10f</div>
<div class="a t" style="left:4219.4px;top:1876.5px;line-height:40px;font-size:25px;color:#a8a8a8;letter-spacing:-0.5px">20f</div>
<div class="a t" style="left:4435.5px;top:1876.5px;line-height:40px;font-size:25px;color:#a8a8a8;letter-spacing:-0.5px">04:00f</div>
<div class="a t" style="left:525.0px;top:2624.5px;line-height:40px;font-size:28px;color:#a6a6a6;">Frame Render Time</div>
<div class="a t" style="left:783.0px;top:2624.5px;line-height:40px;font-size:28px;color:#e8924a;font-weight:bold">524ms</div>
<div class="a t" style="left:952.0px;top:2624.5px;line-height:40px;font-size:28px;color:#c8c8c8;">Toggle Switches / Modes</div>
<div class="a" style="left:1586px;top:1878px;width:36px;height:36px;background:#232323"></div>
<div class="a" style="left:254px;top:1767px;width:4286px;height:900px;box-sizing:border-box;border:3px solid #2f80d8;border-radius:0 0 16px 16px"></div>
<div class="a" style="left:4493px;top:1878px;width:44px;height:36px;background:#1e1e1e"></div>
</body></html>
